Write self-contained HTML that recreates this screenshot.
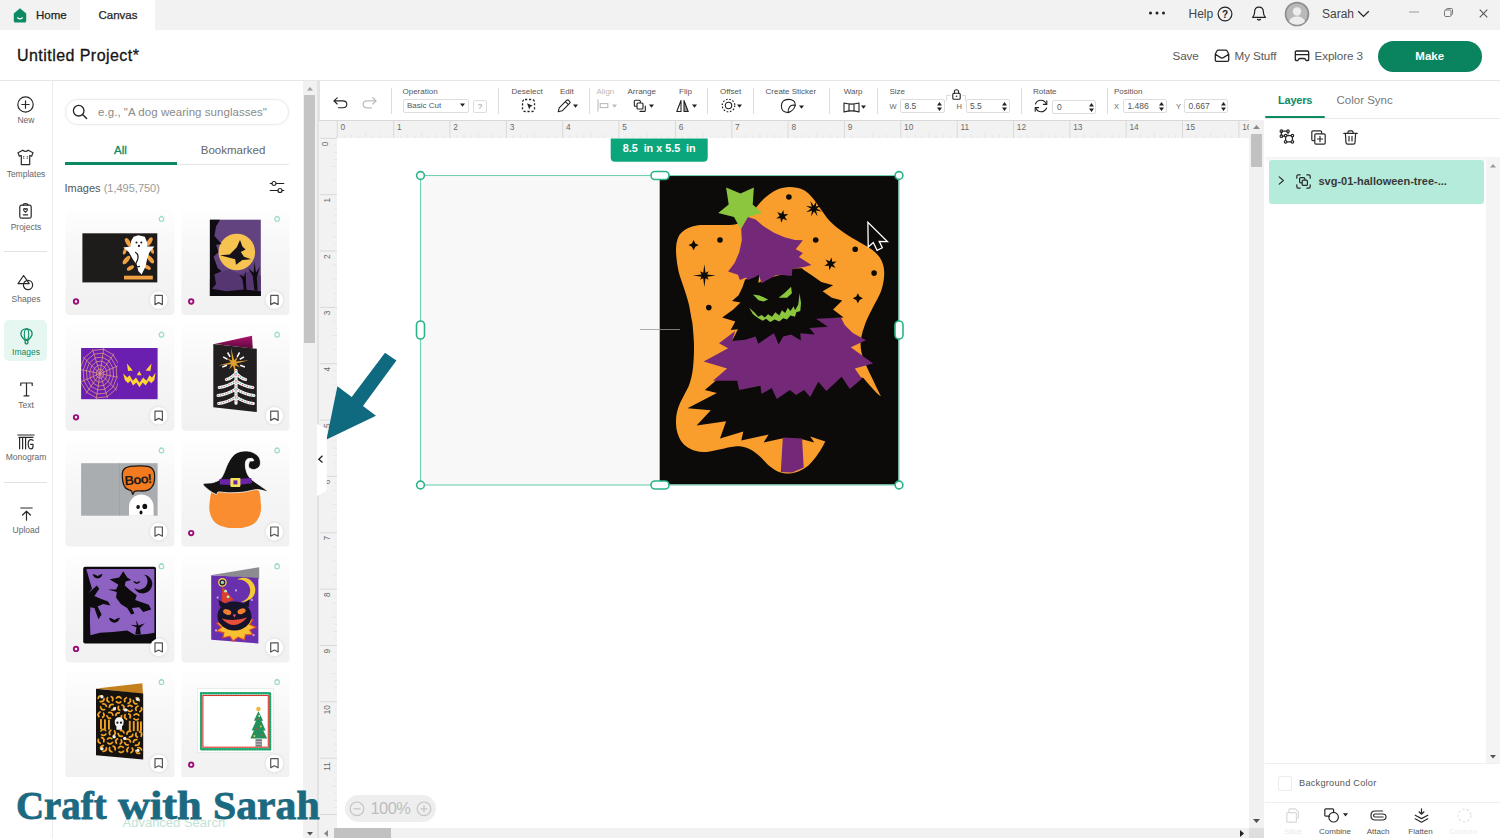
<!DOCTYPE html>
<html lang="en">
<head>
<meta charset="utf-8">
<title>Untitled Project</title>
<style>
*{box-sizing:border-box;margin:0;padding:0}
html,body{width:1500px;height:838px;overflow:hidden;background:#fff}
body{font-family:"Liberation Sans",sans-serif;color:#333;position:relative}
.abs{position:absolute}
.t{position:absolute;white-space:nowrap;line-height:1}
svg{position:absolute;overflow:visible}
/* top bar */
#topbar{left:0;top:0;width:1500px;height:30px;background:#f2f2f2}
#tabcanvas{left:80px;top:0;width:75px;height:30px;background:#fff}
#titlebar{left:0;top:30px;width:1500px;height:51px;background:#fff;border-bottom:1px solid #e6e6e6}
/* left nav */
#leftnav{left:0;top:81px;width:53px;height:757px;background:#fff;border-right:1px solid #ececec}
.navlbl{font-size:8.5px;color:#666;width:52px;text-align:center;left:0}
/* image panel */
#imgpanel{left:53px;top:81px;width:250px;height:757px;background:#fff}
.card{position:absolute;width:109px;height:108px;border-radius:5px;background:linear-gradient(#fdfdfd,#f1f1f1)}
/* panel scrollbar */
#pscroll{left:303px;top:81px;width:14px;height:757px;background:#f1f1f1}
#pthumb{left:304px;top:95px;width:11px;height:248px;background:#c4c4c4}
/* canvas */
#toolbar{left:319px;top:81px;width:946px;height:39px;background:#fff}
#hruler{left:319px;top:120px;width:930px;height:18px;background:#f2f2f2}
#vruler{left:319px;top:138px;width:18px;height:690px;background:#f2f2f2}
.tl{font-size:8px;color:#555}
.sep{position:absolute;width:1px;background:#dcdcdc;top:88px;height:26px}
/* right panel */
#rpanel{left:1263.500px;top:81px;width:237px;height:757px;background:#fff}
</style>
</head>
<body>
<!-- TOPBAR -->
<div id="topbar" class="abs"></div>
<div id="tabcanvas" class="abs"></div>
<svg style="left:13px;top:8px" width="14" height="15" viewBox="0 0 14 15"><path d="M7 0.3 L13.2 5.4 V13 Q13.2 14.6 11.6 14.6 H2.4 Q0.8 14.6 0.8 13 V5.4 Z" fill="#0b8a63"/><path d="M4.6 9.8 Q7 11.9 9.4 9.8" stroke="#fff" stroke-width="1.2" fill="none" stroke-linecap="round"/></svg>
<div class="t" style="left:36px;top:10px;font-size:11.5px;color:#1f1f1f;-webkit-text-stroke:0.25px #1f1f1f">Home</div>
<div class="t" style="left:98.5px;top:10px;font-size:11.5px;color:#1f1f1f;-webkit-text-stroke:0.25px #1f1f1f">Canvas</div>
<svg style="left:1148px;top:10px" width="20" height="6"><circle cx="2.5" cy="3" r="1.5" fill="#222"/><circle cx="9" cy="3" r="1.5" fill="#222"/><circle cx="15.5" cy="3" r="1.5" fill="#222"/></svg>
<div class="t" style="left:1188.5px;top:8px;font-size:12px;color:#444">Help</div>
<svg style="left:1217px;top:5.5px" width="16" height="16" viewBox="0 0 16 16"><circle cx="8" cy="8" r="6.9" fill="none" stroke="#222" stroke-width="1.2"/><text x="8" y="11.6" font-size="10" font-family="Liberation Sans, sans-serif" text-anchor="middle" fill="#222" font-weight="bold">?</text></svg>
<svg style="left:1251px;top:6px" width="16" height="16" viewBox="0 0 16 16"><path d="M8 1.2 C5 1.2 3.6 3.6 3.6 6.2 C3.6 9 2.6 10.2 1.6 11.4 H14.4 C13.4 10.2 12.4 9 12.4 6.2 C12.4 3.6 11 1.2 8 1.2 Z" fill="none" stroke="#222" stroke-width="1.2" stroke-linejoin="round"/><path d="M6.3 13 Q8 15 9.7 13" fill="none" stroke="#222" stroke-width="1.2"/></svg>
<svg style="left:1284px;top:0.5px" width="26" height="26" viewBox="0 0 26 26"><circle cx="13" cy="13" r="12.3" fill="#8e8e8e"/><circle cx="13" cy="13" r="10.6" fill="#b9b9b9"/><circle cx="13" cy="10.5" r="4.2" fill="#ededed"/><path d="M5 20.5 Q7 15.6 13 15.6 Q19 15.6 21 20.5 Q17.5 23.8 13 23.8 Q8.500 23.8 5 20.5Z" fill="#ededed"/></svg>
<div class="t" style="left:1322px;top:8px;font-size:12px;color:#444">Sarah</div>
<svg style="left:1357px;top:10px" width="13" height="8" viewBox="0 0 13 8"><path d="M1.2 1.2 L6.5 6.4 L11.8 1.2" fill="none" stroke="#222" stroke-width="1.3"/></svg>
<svg style="left:1409px;top:11px" width="10" height="2"><rect width="10" height="1" y="0.5" fill="#9a9a9a"/></svg>
<svg style="left:1444px;top:8px" width="9" height="9" viewBox="0 0 9 9"><rect x="0.5" y="2" width="6.5" height="6.5" rx="1.3" fill="none" stroke="#777" stroke-width="1"/><path d="M2.2 2 V1.6 Q2.2 0.500 3.300 0.500 H7.4 Q8.5 0.500 8.5 1.600 V5.700 Q8.5 6.800 7.400 6.800 H7" fill="none" stroke="#777" stroke-width="1"/></svg>
<svg style="left:1478.500px;top:8.500px" width="9" height="9" viewBox="0 0 9 9"><path d="M0.700 0.700 L8.300 8.300 M8.300 0.700 L0.700 8.300" stroke="#555" stroke-width="1.100"/></svg>
<div id="titlebar" class="abs"></div>
<div class="t" style="left:17px;top:48px;font-size:16px;letter-spacing:0.450px;color:#151515;-webkit-text-stroke:0.3px #151515">Untitled Project*</div>
<div class="t" style="left:1172.500px;top:50px;font-size:11.700px;color:#5a5a5a;letter-spacing:-0.100px">Save</div>
<svg style="left:1214px;top:49px" width="16" height="14" viewBox="0 0 16 14"><path d="M1.300 5 V11 Q1.300 12.400 2.700 12.400 H13.300 Q14.700 12.400 14.700 11 V5 M1.300 5 L3 1.800 Q3.300 1.200 4 1.200 H12 Q12.700 1.200 13 1.800 L14.700 5 M1.300 5.300 L6.600 8.600 Q8 9.400 9.400 8.600 L14.700 5.300" fill="none" stroke="#222" stroke-width="1.300" stroke-linejoin="round"/></svg>
<div class="t" style="left:1234.500px;top:50px;font-size:11.700px;color:#5a5a5a;letter-spacing:-0.100px">My Stuff</div>
<svg style="left:1294px;top:50px" width="16" height="12" viewBox="0 0 16 12"><path d="M2.600 1 H13.400 Q14.700 1 14.700 2.300 V9.800 Q14.700 10.500 14 10.500 H12.400 Q11.800 10.500 11.600 9.900 Q11.300 8.500 10.200 8.500 H5.800 Q4.700 8.500 4.400 9.900 Q4.200 10.500 3.600 10.500 H2 Q1.300 10.500 1.300 9.800 V2.300 Q1.300 1 2.600 1 Z M1.300 4.600 H14.700" fill="none" stroke="#222" stroke-width="1.300" stroke-linejoin="round"/></svg>
<div class="t" style="left:1314.500px;top:50px;font-size:11.700px;color:#5a5a5a;letter-spacing:-0.100px">Explore 3</div>
<div class="abs" style="left:1378px;top:40.500px;width:103.500px;height:31px;border-radius:16px;background:#0a835f"></div>
<div class="t" style="left:1378px;top:50.500px;width:103.500px;text-align:center;font-size:11.500px;font-weight:bold;color:#fff">Make</div>
<!-- LEFTNAV -->
<div id="leftnav" class="abs"></div>
<svg style="left:17px;top:96px" width="17" height="17" viewBox="0 0 17 17"><circle cx="8.500" cy="8.500" r="7.700" fill="none" stroke="#2a2a2a" stroke-width="1.2" stroke-linejoin="round" stroke-linecap="round"/><path d="M8.500 4.800 V12.200 M4.800 8.500 H12.200" fill="none" stroke="#2a2a2a" stroke-width="1.2" stroke-linejoin="round" stroke-linecap="round"/></svg>
<div class="t navlbl" style="top:116px">New</div>
<svg style="left:17px;top:149px" width="17" height="17" viewBox="0 0 17 17"><path d="M5.800 1.200 L1 3.800 L2.400 7.200 L4.300 6.500 V15.600 H12.700 V6.500 L14.600 7.200 L16 3.800 L11.200 1.200 Q8.500 3.600 5.800 1.200 Z" fill="none" stroke="#2a2a2a" stroke-width="1.2" stroke-linejoin="round" stroke-linecap="round"/><path d="M6.800 7.500 V9.500 M10.200 7.500 V9.500" fill="none" stroke="#2a2a2a" stroke-width="1.2" stroke-linejoin="round" stroke-linecap="round" stroke-dasharray="0.100 1.500"/></svg>
<div class="t navlbl" style="top:170px">Templates</div>
<svg style="left:19px;top:203px" width="13" height="16" viewBox="0 0 13 16"><rect x="0.800" y="2.200" width="11.400" height="13" rx="1.800" fill="none" stroke="#2a2a2a" stroke-width="1.2" stroke-linejoin="round" stroke-linecap="round"/><path d="M4.200 2.200 Q4.200 0.700 6.500 0.700 Q8.800 0.700 8.800 2.200" fill="none" stroke="#2a2a2a" stroke-width="1.2" stroke-linejoin="round" stroke-linecap="round"/><path d="M6.500 9.200 Q4.200 7.600 4.600 6.300 Q5.200 5.100 6.500 6.300 Q7.800 5.100 8.400 6.300 Q8.800 7.600 6.500 9.200 Z M4.300 11.800 H8.700" fill="none" stroke="#2a2a2a" stroke-width="1.2" stroke-linejoin="round" stroke-linecap="round" stroke-width="1"/></svg>
<div class="t navlbl" style="top:223px">Projects</div>
<div class="abs" style="left:4px;top:251px;width:43px;height:1px;background:#e2e2e2"></div>
<svg style="left:17px;top:274px" width="17" height="17" viewBox="0 0 17 17"><path d="M6.600 1.500 L12.200 9.600 H1 Z" fill="none" stroke="#2a2a2a" stroke-width="1.2" stroke-linejoin="round" stroke-linecap="round"/><circle cx="11" cy="11" r="4.600" fill="none" stroke="#2a2a2a" stroke-width="1.2" stroke-linejoin="round" stroke-linecap="round"/></svg>
<div class="t navlbl" style="top:294.5px">Shapes</div>
<div class="abs" style="left:4px;top:320px;width:43px;height:41px;border-radius:5px;background:#e6f6f0"></div>
<svg style="left:19.500px;top:327.500px" width="13" height="17" viewBox="0 0 13 17"><path d="M6.500 0.800 C3 0.800 0.900 3 0.900 5.800 C0.900 8.600 3.600 10.800 5.200 12.400 H7.800 C9.400 10.800 12.100 8.600 12.100 5.800 C12.100 3 10 0.800 6.500 0.800 Z" fill="none" stroke="#0b8a63" stroke-width="1.300"/><ellipse cx="6.500" cy="6.200" rx="2.200" ry="5.300" fill="none" stroke="#0b8a63" stroke-width="1.100"/><path d="M5.200 12.400 V15 Q5.200 15.800 6 15.800 H7 Q7.800 15.800 7.800 15 V12.400" fill="none" stroke="#0b8a63" stroke-width="1.300"/></svg>
<div class="t navlbl" style="top:348px;color:#0b8a63">Images</div>
<svg style="left:19.500px;top:382px" width="13" height="15" viewBox="0 0 13 15"><path d="M0.800 3.400 V1 H12.200 V3.400 M6.500 1 V13.800 M4 13.800 H9" fill="none" stroke="#2a2a2a" stroke-width="1.2" stroke-linejoin="round" stroke-linecap="round" stroke-width="1.300"/></svg>
<div class="t navlbl" style="top:400.5px">Text</div>
<svg style="left:17px;top:434px" width="18" height="16" viewBox="0 0 18 16"><path d="M0.800 1 H17.200 M2 3.400 H16 M2.600 3.400 V14.800 M5.600 3.400 V14.800 M8.600 3.400 V14.800 M16 6.400 Q15.500 5.600 14 5.600 Q11.200 5.600 11.200 10 Q11.200 14.800 14 14.800 Q16 14.800 16 12.400 V10.300 H13.600" fill="none" stroke="#2a2a2a" stroke-width="1.2" stroke-linejoin="round" stroke-linecap="round" stroke-width="1.100"/></svg>
<div class="t navlbl" style="top:453px">Monogram</div>
<div class="abs" style="left:4px;top:482px;width:43px;height:1px;background:#e2e2e2"></div>
<svg style="left:19.500px;top:506.500px" width="13" height="14" viewBox="0 0 13 14"><path d="M0.800 1 H12.200 M6.500 4.200 V13.200 M2.600 8 L6.500 4.200 L10.400 8" fill="none" stroke="#2a2a2a" stroke-width="1.2" stroke-linejoin="round" stroke-linecap="round" stroke-width="1.300"/></svg>
<div class="t navlbl" style="top:526px">Upload</div>
<!-- IMGPANEL -->
<div id="imgpanel" class="abs"></div>
<div class="abs" style="left:64.500px;top:99px;width:224.500px;height:26px;border-radius:13px;background:#fff;border:1px solid #ededed;box-shadow:0 0 3px rgba(0,0,0,0.06)"></div>
<svg style="left:72px;top:103.500px" width="16" height="16" viewBox="0 0 16 16"><circle cx="6.700" cy="6.700" r="5.300" fill="none" stroke="#222" stroke-width="1.300"/><path d="M10.600 10.600 L14.600 14.600" stroke="#222" stroke-width="1.400" stroke-linecap="round"/></svg>
<div class="t" style="left:98px;top:107px;font-size:11.500px;color:#8a8a8a;letter-spacing:0.050px">e.g., "A dog wearing sunglasses"</div>
<div class="t" style="left:64.500px;width:112px;text-align:center;top:145px;font-size:11.500px;color:#0b8a63;-webkit-text-stroke:0.300px #0b8a63">All</div>
<div class="t" style="left:177px;width:112px;text-align:center;top:145px;font-size:11.500px;color:#666">Bookmarked</div>
<div class="abs" style="left:64.500px;top:163.500px;width:224px;height:1px;background:#e6e6e6"></div>
<div class="abs" style="left:64.500px;top:162px;width:112px;height:2.500px;background:#0b8a63"></div>
<div class="t" style="left:64.500px;top:182.500px;font-size:11px;color:#555">Images <span style="color:#999">(1,495,750)</span></div>
<svg style="left:269px;top:179.500px" width="16" height="14" viewBox="0 0 16 14"><path d="M0.800 3.500 H15.200 M0.800 10.500 H15.200" stroke="#222" stroke-width="1.200"/><circle cx="5" cy="3.500" r="2" fill="#fff" stroke="#222" stroke-width="1.200"/><circle cx="11" cy="10.500" r="2" fill="#fff" stroke="#222" stroke-width="1.200"/></svg>
<!-- CARDS -->
<svg style="left:0;top:0" width="320" height="838">
<defs><linearGradient id="cg" x1="0" y1="0" x2="0" y2="1"><stop offset="0" stop-color="#fefefe"/><stop offset="0.450" stop-color="#f6f6f6"/><stop offset="1" stop-color="#f1f1f1"/></linearGradient><linearGradient id="mg" x1="0" y1="0" x2="0" y2="1"><stop offset="0" stop-color="#b0126e"/><stop offset="1" stop-color="#5a0a3c"/></linearGradient></defs>
<rect x="65.5" y="208.5" width="109" height="106.500" rx="4" fill="url(#cg)"/>
<rect x="181.5" y="208.5" width="108" height="106.500" rx="4" fill="url(#cg)"/>
<rect x="65.5" y="324.3" width="109" height="106.500" rx="4" fill="url(#cg)"/>
<rect x="181.5" y="324.3" width="108" height="106.500" rx="4" fill="url(#cg)"/>
<rect x="65.5" y="440.1" width="109" height="106.500" rx="4" fill="url(#cg)"/>
<rect x="181.5" y="440.1" width="108" height="106.500" rx="4" fill="url(#cg)"/>
<rect x="65.5" y="555.9" width="109" height="106.500" rx="4" fill="url(#cg)"/>
<rect x="181.5" y="555.9" width="108" height="106.500" rx="4" fill="url(#cg)"/>
<rect x="65.5" y="671.7" width="109" height="106.500" rx="4" fill="url(#cg)"/>
<rect x="181.5" y="671.7" width="108" height="106.500" rx="4" fill="url(#cg)"/>
<rect x="82.4" y="233.3" width="74.9" height="49.1" fill="#1d1c1b"/>
<g fill="#f0a040"><ellipse cx="128.0" cy="242.4" rx="2.2" ry="4.8" transform="rotate(-30 128.0 242.4)"/><ellipse cx="149.6" cy="241.6" rx="2.2" ry="4.8" transform="rotate(30 149.6 241.6)"/><ellipse cx="126.4" cy="260.0" rx="2.2" ry="5.1" transform="rotate(40 126.4 260.0)"/><ellipse cx="150.4" cy="259.2" rx="2.2" ry="5.1" transform="rotate(-40 150.4 259.2)"/><ellipse cx="130.4" cy="268.0" rx="1.9" ry="4.0" transform="rotate(60 130.4 268.0)"/><ellipse cx="147.2" cy="267.2" rx="1.9" ry="4.0" transform="rotate(-60 147.2 267.2)"/><ellipse cx="152.0" cy="250.4" rx="1.6" ry="3.5" transform="rotate(-20 152.0 250.4)"/><ellipse cx="124.8" cy="251.2" rx="1.6" ry="3.5" transform="rotate(20 124.8 251.2)"/></g>
<path d="M138.4 235.2 L144.8 236.8 L147.2 242.4 L147.2 246.4 L154.4 246.4 L149.6 252.0 L147.2 258.4 L145.6 266.4 L141.6 274.4 L138.4 271.2 L136.8 264.8 L132.8 259.2 L128.8 252.0 L123.2 247.5 L130.4 246.4 L131.2 240.8 L133.6 236.8 Z" fill="#fff"/>
<g fill="#1d1c1b"><circle cx="136.5" cy="242.4" r="1"/><circle cx="141.3" cy="242.4" r="1"/><circle cx="138.9" cy="245.9" r="1.100"/></g>
<path d="M135.2 252.0 Q140.0 255.2 136.8 261.6 T140.0 266.4" stroke="#1d1c1b" stroke-width="1.200" fill="none"/>
<rect x="124.0" y="275.7" width="28.8" height="3.8" fill="#f0a040"/>
<rect x="209.9" y="219.7" width="50.9" height="76.3" fill="#62437f"/>
<circle cx="236.8" cy="252.0" r="18.300" fill="#f6c250"/>
<path d="M209.9 279.2 L218.4 272.8 L229.6 269.6 L240.8 274.4 L250.4 271.2 L260.8 276.0 L260.8 296.0 L209.9 296.0 Z" fill="#553670"/>
<path d="M209.9 219.7 L220.0 219.7 L216.0 226.4 L214.4 236.0 L221.6 244.0 L216.0 244.8 L218.4 252.0 L213.6 256.8 L217.6 268.0 L221.6 271.2 L214.4 274.4 L216.0 284.0 L212.0 288.8 L226.4 291.2 L244.0 289.6 L260.8 291.2 L260.8 296.0 L209.9 296.0 Z" fill="#0e0c10"/>
<path d="M254.4 290.4 L252.8 276.0 L248.0 268.0 L253.6 272.8 L254.4 261.6 L256.0 272.8 L260.0 266.4 L256.8 277.6 L257.6 290.4 Z" fill="#0e0c10"/>
<path d="M244.0 290.4 L242.4 279.2 L239.2 274.4 L244.0 276.8 L245.6 271.2 L246.4 290.4 Z" fill="#0e0c10"/>
<path d="M240.0 240.0 L242.4 246.4 L245.6 249.6 L240.8 252.0 L244.0 256.8 L251.2 259.2 L242.4 260.0 L236.0 264.8 L235.2 259.2 L220.0 255.2 L229.6 254.4 L233.6 250.4 L236.8 247.2 Z" fill="#15121a"/>
<rect x="81.1" y="348.0" width="76.5" height="51.2" fill="#6b1fb1"/>
<clipPath id="wc"><rect x="81.1" y="348.0" width="36.8" height="51.2"/></clipPath><g clip-path="url(#wc)"><path d="M100.0 373.6 L121.7 378.1 M100.0 373.6 L116.9 390.3 M100.0 373.6 L107.5 398.0 M100.0 373.6 L96.2 399.2 M100.0 373.6 L85.9 393.5 M100.0 373.6 L79.3 382.5 M100.0 373.6 L78.3 369.1 M100.0 373.6 L83.1 356.9 M100.0 373.6 L92.5 349.2 M100.0 373.6 L103.8 348.0 M100.0 373.6 L114.1 353.7 M100.0 373.6 L120.7 364.7 M103.7 374.4 L102.9 376.6 L101.3 377.9 L99.3 378.1 L97.6 377.1 L96.4 375.2 L96.3 372.8 L97.1 370.6 L98.7 369.3 L100.7 369.1 L102.4 370.1 L103.6 372.0 Z M107.0 375.1 L105.5 379.1 L102.4 381.7 L98.8 382.1 L95.4 380.2 L93.3 376.5 L93.0 372.1 L94.5 368.1 L97.6 365.5 L101.2 365.1 L104.6 367.0 L106.7 370.7 Z M110.3 375.8 L108.0 381.7 L103.6 385.5 L98.2 386.1 L93.3 383.3 L90.2 377.9 L89.7 371.4 L92.0 365.5 L96.4 361.7 L101.8 361.1 L106.7 363.9 L109.8 369.3 Z M113.6 376.5 L110.6 384.3 L104.7 389.3 L97.6 390.0 L91.1 386.4 L87.1 379.3 L86.4 370.7 L89.4 362.9 L95.3 357.9 L102.4 357.2 L108.9 360.8 L112.9 367.9 Z M116.8 377.2 L113.1 386.9 L105.8 393.1 L97.0 394.0 L89.0 389.5 L83.9 380.7 L83.2 370.0 L86.9 360.3 L94.2 354.1 L103.0 353.2 L111.0 357.7 L116.1 366.5 Z M120.1 377.9 L115.6 389.5 L107.0 396.8 L96.5 397.9 L86.9 392.5 L80.8 382.1 L79.9 369.3 L84.4 357.7 L93.0 350.4 L103.5 349.3 L113.1 354.7 L119.2 365.1 Z " stroke="#e9a27e" stroke-width="0.750" fill="none" opacity="0.950"/></g>
<path d="M126.9 363.5 L132.8 370.4 L128.0 370.9 Z M151.5 363.5 L145.6 370.4 L150.4 370.9 Z M139.2 370.9 L141.6 375.2 L136.8 375.2 Z M123.2 373.6 L127.2 377.6 L129.6 375.2 L132.8 380.8 L136.0 377.6 L139.5 382.7 L143.2 377.6 L146.4 380.8 L149.6 375.2 L152.0 377.6 L155.5 372.8 L154.4 380.0 L151.2 383.2 L148.8 380.8 L145.6 385.6 L142.7 382.4 L139.5 387.2 L136.3 382.4 L133.1 385.6 L130.4 380.8 L128.0 383.2 L124.8 380.0 Z" fill="#ffd531"/>
<path d="M214.4 344.0 L252.0 335.7 L252.8 348.5 Z" fill="url(#mg)"/>
<path d="M213.3 344.0 L256.8 348.8 L256.8 412.0 L213.3 407.2 Z" fill="#221f20"/>
<path d="M230.9 347.6 L234.2 360.2 L238.2 356.3 L235.9 361.4 L248.9 360.2 L236.2 363.5 L240.2 367.5 L235.1 365.2 L236.3 378.1 L233.0 365.5 L229.0 369.4 L231.3 364.3 L218.3 365.6 L231.0 362.3 L227.0 358.3 L232.1 360.6 Z" fill="#e0a030"/>
<path d="M227.5 359.4 L223.2 356.9 M230.1 356.8 L227.6 352.5 M237.1 356.8 L239.6 352.5 M239.7 359.4 L244.0 356.9 M240.2 365.3 L244.9 367.0 M227.0 365.3 L222.3 367.0 " stroke="#fff" stroke-width="1.500"/>
<path d="M236.0 370.4 V403.2 M226.4 379.5 Q231.2 378.5 236.0 373.0 Q240.8 378.5 245.6 379.5 M219.2 387.5 Q227.6 386.5 236.0 381.0 Q244.4 386.5 252.8 387.5 M218.1 395.5 Q227.0 394.5 236.0 389.0 Q245.0 394.5 253.9 395.5 M218.7 403.5 Q227.4 402.5 236.0 397.0 Q244.6 402.5 253.3 403.5 " stroke="#f4f4f0" stroke-width="3.200" fill="none" stroke-linecap="round"/>
<path d="M236.0 370.4 V403.2 M226.4 379.5 Q231.2 378.5 236.0 373.0 Q240.8 378.5 245.6 379.5 M219.2 387.5 Q227.6 386.5 236.0 381.0 Q244.4 386.5 252.8 387.5 M218.1 395.5 Q227.0 394.5 236.0 389.0 Q245.0 394.5 253.9 395.5 M218.7 403.5 Q227.4 402.5 236.0 397.0 Q244.6 402.5 253.3 403.5 " stroke="#d04a7a" stroke-width="1.200" fill="none" stroke-dasharray="0.100 5" stroke-linecap="round"/>
<path d="M236.0 370.4 V403.2 M226.4 379.5 Q231.2 378.5 236.0 373.0 Q240.8 378.5 245.6 379.5 M219.2 387.5 Q227.6 386.5 236.0 381.0 Q244.4 386.5 252.8 387.5 M218.1 395.5 Q227.0 394.5 236.0 389.0 Q245.0 394.5 253.9 395.5 M218.7 403.5 Q227.4 402.5 236.0 397.0 Q244.6 402.5 253.3 403.5 " stroke="#45b8a0" stroke-width="1.200" fill="none" stroke-dasharray="0.100 5" stroke-dashoffset="2.500" stroke-linecap="round"/>
<rect x="81.1" y="463.2" width="76.5" height="52.5" fill="#a9adb0"/>
<rect x="119.2" y="463.2" width="0.700" height="52.5" fill="#c98a94"/>
<path d="M123.2 470.4 C124.5 468.0 126.3 467.1 130.4 466.4 C134.5 465.7 144.1 465.5 148.0 466.4 C151.9 467.3 153.1 469.1 154.1 472.0 C155.0 474.9 154.7 480.9 153.6 484.0 C152.5 487.1 150.3 489.2 147.2 490.4 C144.1 491.6 137.6 490.5 135.2 491.2 C132.8 491.9 133.5 494.5 132.8 494.4 C132.1 494.3 132.4 491.8 131.2 490.7 C130.0 489.7 127.0 489.7 125.6 488.0 C124.2 486.3 123.1 483.7 122.7 480.8 C122.3 477.9 121.9 472.8 123.2 470.4 Z" fill="#f37a1f" stroke="#1a1a1a" stroke-width="1.300"/>
<text x="138.4" y="484.0" text-anchor="middle" font-size="13" font-weight="bold" fill="#1a1a1a" font-family="Liberation Sans, sans-serif" transform="rotate(-5 138.4 484.0)" letter-spacing="-0.700">Boo!</text>
<path d="M129.0 515.7 V506.7 A12.300 12.300 0 0 1 153.6 506.7 V515.7 Z" fill="#fff"/>
<g fill="#111"><ellipse cx="138.1" cy="506.9" rx="1.800" ry="2"/><ellipse cx="144.8" cy="506.4" rx="2.400" ry="2.700"/><ellipse cx="141.0" cy="512.5" rx="1.500" ry="1.900"/></g>
<path d="M214.4 488.8 C218.8 486.1 228.9 487.2 236.0 487.2 C243.1 487.2 252.7 486.1 256.8 488.8 C260.9 491.5 260.3 498.9 260.8 503.2 C261.3 507.5 261.1 511.1 260.0 514.4 C258.9 517.7 257.1 521.0 254.4 523.2 C251.7 525.4 247.2 526.7 244.0 527.5 C240.8 528.3 238.1 528.0 235.2 528.0 C232.3 528.0 229.6 528.3 226.4 527.5 C223.2 526.7 218.7 525.4 216.0 523.2 C213.3 521.0 211.5 517.7 210.4 514.4 C209.3 511.1 208.9 507.5 209.6 503.2 C210.3 498.9 210.0 491.5 214.4 488.8 Z" fill="#f98d2f"/>
<path d="M203.2 484.0 C203.7 482.5 210.5 483.5 213.6 482.4 C216.7 481.3 219.2 480.8 221.6 477.6 C224.0 474.4 225.9 467.1 228.0 463.2 C230.1 459.3 232.0 456.4 234.4 454.4 C236.8 452.4 239.5 451.6 242.4 451.2 C245.3 450.8 249.2 450.9 252.0 452.0 C254.8 453.1 257.9 455.3 259.2 457.6 C260.5 459.9 260.8 463.6 260.0 465.6 C259.2 467.6 256.3 469.3 254.4 469.6 C252.5 469.9 249.6 468.5 248.8 467.2 C248.0 465.9 248.8 462.7 249.6 461.6 C250.4 460.5 253.2 461.3 253.6 460.8 C254.0 460.3 253.2 458.5 252.0 458.4 C250.8 458.3 247.5 458.4 246.4 460.0 C245.3 461.6 245.1 465.1 245.6 468.0 C246.1 470.9 247.2 474.7 249.6 477.6 C252.0 480.5 257.1 483.3 260.0 485.6 C262.9 487.9 267.7 490.5 267.2 491.2 C266.7 491.9 260.7 489.5 256.8 489.6 C252.9 489.7 248.5 491.5 244.0 492.0 C239.5 492.5 233.9 492.8 229.6 492.8 C225.3 492.8 220.5 491.7 218.4 492.0 C216.3 492.3 218.1 494.5 216.8 494.4 C215.5 494.3 212.7 492.9 210.4 491.2 C208.1 489.5 202.7 485.5 203.2 484.0 Z" fill="#131313" stroke="#fff" stroke-width="0.800"/>
<path d="M219.2 479.2 L235.2 478.9 L251.2 477.9 L252.0 483.2 L236.0 485.3 L220.0 484.5 Z" fill="#6a22a6"/>
<rect x="230.4" y="477.9" width="10" height="9" rx="0.800" fill="#f2e35a"/><rect x="233.4" y="480.4" width="4" height="4" fill="#6a22a6"/>
<rect x="83.2" y="566.7" width="72.8" height="76.8" rx="2" fill="#0d0b0e"/>
<path d="M86.4 569.0 L154.4 569.0 L154.4 632.8 L147.2 633.9 L135.2 634.9 L127.2 630.4 L112.8 632.0 L100.0 632.8 L90.4 635.2 L89.6 612.8 L88.0 592.0 Z" fill="#8e62c2"/>
<path d="M86.4 569.0 L89.6 580.8 L92.0 588.8 L88.0 593.6 L96.8 585.6 L99.2 588.8 L94.4 596.0 L100.0 598.4 L108.0 601.6 L110.4 605.6 L103.2 604.0 L97.6 606.4 L101.6 614.4 L98.4 619.2 L94.4 608.0 L90.4 607.2 L89.6 619.2 L86.4 635.2 Z" fill="#0d0b0e"/>
<path d="M109.6 579.2 L119.2 577.6 L123.2 571.2 L127.2 577.6 L131.2 580.0 L125.6 581.6 L124.8 585.6 L130.4 590.4 L136.8 595.2 L135.2 600.0 L148.8 604.8 L151.2 609.6 L143.2 612.0 L139.2 607.2 L132.0 608.0 L134.4 613.6 L131.2 614.4 L127.2 608.0 L120.8 604.0 L116.0 597.6 L116.8 592.0 L108.0 589.6 L116.0 589.6 L118.4 584.8 Z" fill="#0d0b0e"/>
<path d="M144.2 574.5 A9.500 9.500 0 1 1 134.2 588.0 A7.500 7.500 0 0 0 144.2 574.5 Z" fill="#0d0b0e"/>
<path d="M92.6 574.0 Q95.6 574.5 97.6 576.0 Q99.6 574.5 102.6 574.0 Q101.6 578.0 97.6 578.5 Q93.6 578.0 92.6 574.0 Z" fill="#0d0b0e"/>
<path d="M108.9 617.8 Q112.2 618.4 114.4 620.0 Q116.6 618.4 119.9 617.8 Q118.8 622.2 114.4 622.8 Q110.0 622.2 108.9 617.8 Z" fill="#0d0b0e"/>
<path d="M133.3 581.0 Q135.4 581.4 136.8 582.4 Q138.2 581.4 140.3 581.0 Q139.6 583.8 136.8 584.1 Q134.0 583.8 133.3 581.0 Z" fill="#0d0b0e"/>
<path d="M135.2 634.4 L136.5 627.2 L130.4 624.8 L136.8 625.3 L136.0 620.0 L138.7 625.6 L144.8 623.2 L140.0 628.0 L140.8 634.4 Z" fill="#0d0b0e"/>
<path d="M212.0 574.9 L259.2 567.2 L259.2 578.7 Z" fill="#8b8b90"/>
<path d="M211.2 575.2 L258.4 577.9 L258.4 643.5 L211.2 639.7 Z" fill="#6930ae"/>
<path d="M256.1 627.2 L249.8 630.0 L252.9 634.8 L245.4 634.8 L244.4 639.9 L238.0 637.1 L233.1 641.1 L230.0 636.3 L222.8 637.8 L223.9 632.6 L216.7 631.1 L221.6 627.2 L216.7 623.3 L223.9 621.8 L222.8 616.6 L230.0 618.1 L233.1 613.3 L238.0 617.3 L244.4 614.5 L245.4 619.6 L252.9 619.6 L249.8 624.4 Z" fill="#f8c030" stroke="#e2452a" stroke-width="1.100"/>
<path d="M222.4 586.4 L233.6 600.0 L221.6 604.0 Z" fill="#d8402c"/>
<circle cx="222.4" cy="582.4" r="4.300" fill="#f5d040"/><circle cx="222.4" cy="582.4" r="3" fill="#2a1a40"/><circle cx="222.4" cy="582.4" r="1.700" fill="#8fe0a0"/>
<circle cx="225.6" cy="591.2" r="1.400" fill="#b8f0c0"/>
<circle cx="228.0" cy="596.8" r="1.400" fill="#b8f0c0"/>
<path d="M237.0 579.6 A12 12 0 1 1 241.0 601.6 A8 8 0 0 0 237.0 579.6 Z" fill="#f5c935"/>
<ellipse cx="234.4" cy="616.0" rx="17" ry="14.500" fill="#17132a"/>
<path d="M220.0 607.2 L218.4 600.0 L226.4 604.0 Z M242.4 604.0 L249.6 599.2 L248.8 607.2 Z" fill="#17132a"/>
<ellipse cx="227.2" cy="612.0" rx="4.200" ry="2.600" fill="#f08030" transform="rotate(20 227.2 612.0)"/><ellipse cx="241.6" cy="611.2" rx="4.200" ry="2.600" fill="#f08030" transform="rotate(-20 241.6 611.2)"/>
<path d="M232.6 614.5 H236.2 L234.4 617.5 Z" fill="#f0506a"/>
<path d="M221.6 618.4 Q234.4 632.0 247.2 617.6 Q234.4 622.0 221.6 618.4 Z" fill="#e8503a"/>
<circle cx="236.0" cy="590.4" r="1.100" fill="#c8a0e8"/>
<circle cx="216.0" cy="630.4" r="1.100" fill="#c8a0e8"/>
<circle cx="253.6" cy="635.2" r="1.100" fill="#c8a0e8"/>
<circle cx="252.0" cy="600.0" r="1.100" fill="#c8a0e8"/>
<circle cx="217.6" cy="597.6" r="1.100" fill="#c8a0e8"/>
<path d="M96.5 688.5 L142.4 683.2 L142.9 693.9 Z" fill="#c5801e"/>
<path d="M96.0 688.8 L143.2 693.6 L143.2 759.5 L96.0 755.2 Z" fill="#15120f"/>
<circle cx="101.1" cy="698.8" r="2.900" fill="none" stroke="#f0a224" stroke-width="1.700" stroke-dasharray="6 2.500" transform="rotate(0 101.1 698.8)"/><circle cx="109.9" cy="699.3" r="2.900" fill="none" stroke="#f0a224" stroke-width="1.700" stroke-dasharray="6 2.500" transform="rotate(110 109.9 699.3)"/><circle cx="118.7" cy="699.8" r="2.900" fill="none" stroke="#f0a224" stroke-width="1.700" stroke-dasharray="6 2.500" transform="rotate(220 118.7 699.8)"/><circle cx="127.5" cy="700.4" r="2.900" fill="none" stroke="#f0a224" stroke-width="1.700" stroke-dasharray="6 2.500" transform="rotate(330 127.5 700.4)"/><circle cx="136.3" cy="700.9" r="2.900" fill="none" stroke="#f0a224" stroke-width="1.700" stroke-dasharray="6 2.500" transform="rotate(80 136.3 700.9)"/><circle cx="103.5" cy="706.8" r="2.900" fill="none" stroke="#f0a224" stroke-width="1.700" stroke-dasharray="6 2.500" transform="rotate(70 103.5 706.8)"/><circle cx="112.3" cy="707.3" r="2.900" fill="none" stroke="#f0a224" stroke-width="1.700" stroke-dasharray="6 2.500" transform="rotate(180 112.3 707.3)"/><circle cx="121.1" cy="707.8" r="2.900" fill="none" stroke="#f0a224" stroke-width="1.700" stroke-dasharray="6 2.500" transform="rotate(290 121.1 707.8)"/><circle cx="129.9" cy="708.4" r="2.900" fill="none" stroke="#f0a224" stroke-width="1.700" stroke-dasharray="6 2.500" transform="rotate(40 129.9 708.4)"/><circle cx="138.7" cy="708.9" r="2.900" fill="none" stroke="#f0a224" stroke-width="1.700" stroke-dasharray="6 2.500" transform="rotate(150 138.7 708.9)"/><circle cx="101.1" cy="714.8" r="2.900" fill="none" stroke="#f0a224" stroke-width="1.700" stroke-dasharray="6 2.500" transform="rotate(140 101.1 714.8)"/><circle cx="109.9" cy="715.3" r="2.900" fill="none" stroke="#f0a224" stroke-width="1.700" stroke-dasharray="6 2.500" transform="rotate(250 109.9 715.3)"/><circle cx="118.7" cy="715.8" r="2.900" fill="none" stroke="#f0a224" stroke-width="1.700" stroke-dasharray="6 2.500" transform="rotate(0 118.7 715.8)"/><circle cx="127.5" cy="716.4" r="2.900" fill="none" stroke="#f0a224" stroke-width="1.700" stroke-dasharray="6 2.500" transform="rotate(110 127.5 716.4)"/><circle cx="136.3" cy="716.9" r="2.900" fill="none" stroke="#f0a224" stroke-width="1.700" stroke-dasharray="6 2.500" transform="rotate(220 136.3 716.9)"/><circle cx="103.5" cy="732.4" r="2.900" fill="none" stroke="#f0a224" stroke-width="1.700" stroke-dasharray="6 2.500" transform="rotate(210 103.5 732.4)"/><circle cx="112.3" cy="732.9" r="2.900" fill="none" stroke="#f0a224" stroke-width="1.700" stroke-dasharray="6 2.500" transform="rotate(320 112.3 732.9)"/><circle cx="121.1" cy="733.4" r="2.900" fill="none" stroke="#f0a224" stroke-width="1.700" stroke-dasharray="6 2.500" transform="rotate(70 121.1 733.4)"/><circle cx="129.9" cy="734.0" r="2.900" fill="none" stroke="#f0a224" stroke-width="1.700" stroke-dasharray="6 2.500" transform="rotate(180 129.9 734.0)"/><circle cx="138.7" cy="734.5" r="2.900" fill="none" stroke="#f0a224" stroke-width="1.700" stroke-dasharray="6 2.500" transform="rotate(290 138.7 734.5)"/><circle cx="101.1" cy="740.4" r="2.900" fill="none" stroke="#f0a224" stroke-width="1.700" stroke-dasharray="6 2.500" transform="rotate(280 101.1 740.4)"/><circle cx="109.9" cy="740.9" r="2.900" fill="none" stroke="#f0a224" stroke-width="1.700" stroke-dasharray="6 2.500" transform="rotate(30 109.9 740.9)"/><circle cx="118.7" cy="741.4" r="2.900" fill="none" stroke="#f0a224" stroke-width="1.700" stroke-dasharray="6 2.500" transform="rotate(140 118.7 741.4)"/><circle cx="127.5" cy="742.0" r="2.900" fill="none" stroke="#f0a224" stroke-width="1.700" stroke-dasharray="6 2.500" transform="rotate(250 127.5 742.0)"/><circle cx="136.3" cy="742.5" r="2.900" fill="none" stroke="#f0a224" stroke-width="1.700" stroke-dasharray="6 2.500" transform="rotate(0 136.3 742.5)"/><circle cx="103.5" cy="748.4" r="2.900" fill="none" stroke="#f0a224" stroke-width="1.700" stroke-dasharray="6 2.500" transform="rotate(350 103.5 748.4)"/><circle cx="112.3" cy="748.9" r="2.900" fill="none" stroke="#f0a224" stroke-width="1.700" stroke-dasharray="6 2.500" transform="rotate(100 112.3 748.9)"/><circle cx="121.1" cy="749.4" r="2.900" fill="none" stroke="#f0a224" stroke-width="1.700" stroke-dasharray="6 2.500" transform="rotate(210 121.1 749.4)"/><circle cx="129.9" cy="750.0" r="2.900" fill="none" stroke="#f0a224" stroke-width="1.700" stroke-dasharray="6 2.500" transform="rotate(320 129.9 750.0)"/><circle cx="138.7" cy="750.5" r="2.900" fill="none" stroke="#f0a224" stroke-width="1.700" stroke-dasharray="6 2.500" transform="rotate(70 138.7 750.5)"/>
<rect x="100.0" y="719.1" width="1.900" height="10" fill="#f0a224"/>
<rect x="104.0" y="719.4" width="1.900" height="10" fill="#f0a224"/>
<rect x="108.0" y="719.6" width="1.900" height="10" fill="#f0a224"/>
<rect x="128.8" y="720.8" width="1.900" height="10" fill="#f0a224"/>
<rect x="132.8" y="721.1" width="1.900" height="10" fill="#f0a224"/>
<rect x="136.8" y="721.3" width="1.900" height="10" fill="#f0a224"/>
<rect x="140.0" y="721.5" width="1.900" height="10" fill="#f0a224"/>
<path d="M114.7 721.7 A4.500 4.500 0 0 1 123.7 721.7 Q123.7 725.2 122.0 726.2 V729.7 H116.4 V726.2 Q114.7 725.2 114.7 721.7 Z" fill="#f4f4f4"/>
<circle cx="117.4" cy="722.7" r="1.100" fill="#15120f"/><circle cx="121.0" cy="722.7" r="1.100" fill="#15120f"/>
<circle cx="101.9" cy="696.8" r="1.700" fill="#f0f0f0"/>
<circle cx="137.6" cy="699.2" r="1.700" fill="#f0f0f0"/>
<circle cx="114.4" cy="708.8" r="1.700" fill="#f0f0f0"/>
<circle cx="125.6" cy="709.9" r="1.700" fill="#f0f0f0"/>
<circle cx="114.1" cy="736.8" r="1.700" fill="#f0f0f0"/>
<circle cx="124.8" cy="738.4" r="1.700" fill="#f0f0f0"/>
<circle cx="101.9" cy="748.8" r="1.700" fill="#f0f0f0"/>
<circle cx="137.9" cy="750.4" r="1.700" fill="#f0f0f0"/>
<rect x="197.6" y="688.5" width="76.0" height="64.0" fill="#fff" stroke="#e2e2e2" stroke-width="0.600"/>
<rect x="201.1" y="693.3" width="69.0" height="56.0" fill="none" stroke="#1fa56e" stroke-width="2.600" stroke-dasharray="0.100 2.400" stroke-linecap="round"/>
<rect x="201.1" y="693.3" width="69.0" height="56.0" fill="none" stroke="#1fa56e" stroke-width="1.800"/>
<rect x="202.9" y="695.5" width="65.4" height="51.7" fill="#fff" stroke="#d9352c" stroke-width="1.100"/>
<path d="M258.4 711.2 L263.2 720.8 L261.3 720.8 L265.6 730.4 L263.2 730.4 L267.2 738.4 L250.4 738.4 L253.9 730.4 L251.7 730.4 L256.0 720.8 L253.9 720.8 Z" fill="#23915c"/>
<rect x="255.5" y="739.2" width="6.500" height="7.500" fill="#7a7a7a"/><path d="M255.5 741.7 h6.500 M255.5 744.2 h6.500" stroke="#e8e8e8" stroke-width="0.700"/>
<circle cx="258.4" cy="709.0" r="2.200" fill="#f0b83a"/>
<circle cx="257.6" cy="719.2" r="0.900" fill="#e04040"/>
<circle cx="260.8" cy="726.4" r="0.900" fill="#f0d060"/>
<circle cx="256.0" cy="728.8" r="0.900" fill="#e04040"/>
<circle cx="261.6" cy="735.2" r="0.900" fill="#e04040"/>
<circle cx="254.4" cy="736.0" r="0.900" fill="#f0d060"/>
<circle cx="259.2" cy="716.0" r="0.900" fill="#f0f0f0"/>
<circle cx="161.5" cy="219.0" r="2.300" fill="none" stroke="#9adbc6" stroke-width="1.100"/><path d="M160.0 216.4 h3" stroke="#9adbc6" stroke-width="1.100"/>
<circle cx="76.0" cy="301.5" r="2.200" fill="#fff" stroke="#9c0f78" stroke-width="1.900"/>
<circle cx="158.7" cy="300.0" r="8.800" fill="#fff" style="filter:drop-shadow(0 0.500px 1.500px rgba(0,0,0,0.130))"/>
<path d="M155.0 295.4 H162.4 V304.6 L158.7 302.6 L155.0 304.6 Z" fill="none" stroke="#555" stroke-width="1.200" stroke-linejoin="round"/>
<circle cx="277.1" cy="219.0" r="2.300" fill="none" stroke="#9adbc6" stroke-width="1.100"/><path d="M275.6 216.4 h3" stroke="#9adbc6" stroke-width="1.100"/>
<circle cx="191.2" cy="301.5" r="2.200" fill="#fff" stroke="#9c0f78" stroke-width="1.900"/>
<circle cx="274.4" cy="300.0" r="8.800" fill="#fff" style="filter:drop-shadow(0 0.500px 1.500px rgba(0,0,0,0.130))"/>
<path d="M270.7 295.4 H278.1 V304.6 L274.4 302.6 L270.7 304.6 Z" fill="none" stroke="#555" stroke-width="1.200" stroke-linejoin="round"/>
<circle cx="161.5" cy="334.8" r="2.300" fill="none" stroke="#9adbc6" stroke-width="1.100"/><path d="M160.0 332.2 h3" stroke="#9adbc6" stroke-width="1.100"/>
<circle cx="76.0" cy="417.3" r="2.200" fill="#fff" stroke="#9c0f78" stroke-width="1.900"/>
<circle cx="158.7" cy="415.8" r="8.800" fill="#fff" style="filter:drop-shadow(0 0.500px 1.500px rgba(0,0,0,0.130))"/>
<path d="M155.0 411.2 H162.4 V420.4 L158.7 418.4 L155.0 420.4 Z" fill="none" stroke="#555" stroke-width="1.200" stroke-linejoin="round"/>
<circle cx="277.1" cy="334.8" r="2.300" fill="none" stroke="#9adbc6" stroke-width="1.100"/><path d="M275.6 332.2 h3" stroke="#9adbc6" stroke-width="1.100"/>
<circle cx="274.4" cy="415.8" r="8.800" fill="#fff" style="filter:drop-shadow(0 0.500px 1.500px rgba(0,0,0,0.130))"/>
<path d="M270.7 411.2 H278.1 V420.4 L274.4 418.4 L270.7 420.4 Z" fill="none" stroke="#555" stroke-width="1.200" stroke-linejoin="round"/>
<circle cx="161.5" cy="450.6" r="2.300" fill="none" stroke="#9adbc6" stroke-width="1.100"/><path d="M160.0 448.0 h3" stroke="#9adbc6" stroke-width="1.100"/>
<circle cx="158.7" cy="531.6" r="8.800" fill="#fff" style="filter:drop-shadow(0 0.500px 1.500px rgba(0,0,0,0.130))"/>
<path d="M155.0 527.0 H162.4 V536.2 L158.7 534.2 L155.0 536.2 Z" fill="none" stroke="#555" stroke-width="1.200" stroke-linejoin="round"/>
<circle cx="277.1" cy="450.6" r="2.300" fill="none" stroke="#9adbc6" stroke-width="1.100"/><path d="M275.6 448.0 h3" stroke="#9adbc6" stroke-width="1.100"/>
<circle cx="191.2" cy="533.1" r="2.200" fill="#fff" stroke="#9c0f78" stroke-width="1.900"/>
<circle cx="274.4" cy="531.6" r="8.800" fill="#fff" style="filter:drop-shadow(0 0.500px 1.500px rgba(0,0,0,0.130))"/>
<path d="M270.7 527.0 H278.1 V536.2 L274.4 534.2 L270.7 536.2 Z" fill="none" stroke="#555" stroke-width="1.200" stroke-linejoin="round"/>
<circle cx="161.5" cy="566.4" r="2.300" fill="none" stroke="#9adbc6" stroke-width="1.100"/><path d="M160.0 563.8 h3" stroke="#9adbc6" stroke-width="1.100"/>
<circle cx="76.0" cy="648.9" r="2.200" fill="#fff" stroke="#9c0f78" stroke-width="1.900"/>
<circle cx="158.7" cy="647.4" r="8.800" fill="#fff" style="filter:drop-shadow(0 0.500px 1.500px rgba(0,0,0,0.130))"/>
<path d="M155.0 642.8 H162.4 V652.0 L158.7 650.0 L155.0 652.0 Z" fill="none" stroke="#555" stroke-width="1.200" stroke-linejoin="round"/>
<circle cx="277.1" cy="566.4" r="2.300" fill="none" stroke="#9adbc6" stroke-width="1.100"/><path d="M275.6 563.8 h3" stroke="#9adbc6" stroke-width="1.100"/>
<circle cx="274.4" cy="647.4" r="8.800" fill="#fff" style="filter:drop-shadow(0 0.500px 1.500px rgba(0,0,0,0.130))"/>
<path d="M270.7 642.8 H278.1 V652.0 L274.4 650.0 L270.7 652.0 Z" fill="none" stroke="#555" stroke-width="1.200" stroke-linejoin="round"/>
<circle cx="161.5" cy="682.2" r="2.300" fill="none" stroke="#9adbc6" stroke-width="1.100"/><path d="M160.0 679.6 h3" stroke="#9adbc6" stroke-width="1.100"/>
<circle cx="158.7" cy="763.2" r="8.800" fill="#fff" style="filter:drop-shadow(0 0.500px 1.500px rgba(0,0,0,0.130))"/>
<path d="M155.0 758.6 H162.4 V767.8 L158.7 765.8 L155.0 767.8 Z" fill="none" stroke="#555" stroke-width="1.200" stroke-linejoin="round"/>
<circle cx="277.1" cy="682.2" r="2.300" fill="none" stroke="#9adbc6" stroke-width="1.100"/><path d="M275.6 679.6 h3" stroke="#9adbc6" stroke-width="1.100"/>
<circle cx="191.2" cy="764.7" r="2.200" fill="#fff" stroke="#9c0f78" stroke-width="1.900"/>
<circle cx="274.4" cy="763.2" r="8.800" fill="#fff" style="filter:drop-shadow(0 0.500px 1.500px rgba(0,0,0,0.130))"/>
<path d="M270.7 758.6 H278.1 V767.8 L274.4 765.8 L270.7 767.8 Z" fill="none" stroke="#555" stroke-width="1.200" stroke-linejoin="round"/>
</svg>
<!-- /CARDS -->
<div id="pscroll" class="abs"></div>
<div id="pthumb" class="abs"></div>
<!-- CANVAS -->
<div id="toolbar" class="abs"></div>
<svg style="left:333px;top:96.500px" width="15" height="12" viewBox="0 0 15 12"><path d="M4.200 0.800 L0.900 3.900 L4.200 7 M1.200 3.900 H9.800 Q13.800 3.900 13.800 7.300 Q13.800 10.800 9.800 10.800 H5.500" fill="none" stroke="#222" stroke-width="1.100" stroke-linejoin="round" stroke-linecap="round" stroke-width="1.300"/></svg>
<svg style="left:362px;top:96.500px" width="15" height="12" viewBox="0 0 15 12"><path d="M10.800 0.800 L14.100 3.900 L10.800 7 M13.800 3.900 H5.200 Q1.200 3.900 1.200 7.300 Q1.200 10.800 5.200 10.800 H9.500" fill="none" stroke="#bdbdbd" stroke-width="1.300" stroke-linejoin="round" stroke-linecap="round"/></svg>
<div class="sep" style="left:390.5px"></div>
<div class="t tl" style="left:402.5px;top:87.500px;color:#555">Operation</div>
<div class="abs" style="left:402.500px;top:99px;width:66px;height:14px;border:1px solid #dedede;border-radius:2px;background:#fff"></div>
<div class="t" style="left:407px;top:102px;font-size:8px;color:#555">Basic Cut</div>
<svg style="left:459.8px;top:103px" width="5" height="4"><path d="M0 0.500 H5 L2.500 3.700 Z" fill="#222"/></svg>
<div class="abs" style="left:473px;top:99.500px;width:14px;height:13.500px;border:1px solid #dedede;border-radius:2px;background:#fff"></div>
<div class="t" style="left:473px;width:14px;text-align:center;top:102.500px;font-size:8px;color:#888">?</div>
<div class="sep" style="left:498px"></div>
<div class="t tl" style="left:511.5px;top:87.500px;color:#555">Deselect</div>
<svg style="left:520.500px;top:98px" width="15" height="15" viewBox="0 0 15 15"><rect x="1.500" y="1.500" width="12" height="12" rx="2.500" fill="none" stroke="#222" stroke-width="1.300" stroke-dasharray="2.200 1.800"/><path d="M6 5.200 L11.800 7.800 L9.300 8.800 L8.300 11.500 Z" fill="#222"/></svg>
<div class="t tl" style="left:560px;top:87.500px;color:#555">Edit</div>
<svg style="left:557px;top:98.5px" width="14" height="14" viewBox="0 0 14 14"><path d="M1.200 12.800 L2.200 8.800 L9.800 1.200 Q10.600 0.600 11.400 1.200 L12.800 2.600 Q13.400 3.400 12.800 4.200 L5.200 11.800 Z M8.400 2.600 L11.400 5.600" fill="none" stroke="#222" stroke-width="1.100" stroke-linejoin="round" stroke-linecap="round"/></svg>
<svg style="left:573.2px;top:104px" width="5" height="4"><path d="M0 0.500 H5 L2.500 3.700 Z" fill="#222"/></svg>
<div class="sep" style="left:589px"></div>
<div class="t tl" style="left:596.5px;top:87.500px;color:#bbb">Align</div>
<svg style="left:597px;top:99px" width="13" height="13" viewBox="0 0 13 13"><path d="M1 0.500 V12.500" stroke="#bbb" stroke-width="1.100"/><rect x="3.200" y="4.600" width="7.600" height="4" fill="none" stroke="#bbb" stroke-width="1.100"/></svg>
<svg style="left:611.5px;top:104px" width="5" height="4"><path d="M0 0.500 H5 L2.500 3.700 Z" fill="#bbb"/></svg>
<div class="t tl" style="left:627.5px;top:87.500px;color:#555">Arrange</div>
<svg style="left:633px;top:98.5px" width="14" height="14" viewBox="0 0 14 14"><rect x="1.300" y="1.300" width="6" height="6" rx="1" fill="none" stroke="#222" stroke-width="1.100" stroke-linejoin="round" stroke-linecap="round"/><rect x="4" y="4" width="6" height="6" rx="1" fill="#fff" stroke="#222" stroke-width="1.100"/><path d="M12.300 7 V11.400 Q12.300 12.400 11.300 12.400 H7" fill="none" stroke="#222" stroke-width="1.100" stroke-linejoin="round" stroke-linecap="round"/></svg>
<svg style="left:648.5px;top:104px" width="5" height="4"><path d="M0 0.500 H5 L2.500 3.700 Z" fill="#222"/></svg>
<div class="t tl" style="left:679px;top:87.500px;color:#555">Flip</div>
<svg style="left:676px;top:98.5px" width="13" height="14" viewBox="0 0 13 14"><path d="M5 1.500 V12.500 H0.800 Z" fill="none" stroke="#222" stroke-width="1.100" stroke-linejoin="round" stroke-linecap="round"/><path d="M8 1.500 V12.500 H12.200 Z" fill="#999" stroke="#222" stroke-width="1.100" stroke-linejoin="round"/></svg>
<svg style="left:691.5px;top:104px" width="5" height="4"><path d="M0 0.500 H5 L2.500 3.700 Z" fill="#222"/></svg>
<div class="sep" style="left:707.3px"></div>
<div class="t tl" style="left:720px;top:87.500px;color:#555">Offset</div>
<svg style="left:720.500px;top:98px" width="15" height="15" viewBox="0 0 15 15"><circle cx="7.500" cy="7.500" r="3.200" fill="none" stroke="#222" stroke-width="1.100" stroke-linejoin="round" stroke-linecap="round"/><circle cx="7.500" cy="7.500" r="6.300" fill="none" stroke="#222" stroke-width="1.200" stroke-dasharray="1.600 1.700"/></svg>
<svg style="left:736.5px;top:104px" width="5" height="4"><path d="M0 0.500 H5 L2.500 3.700 Z" fill="#222"/></svg>
<div class="sep" style="left:753.3px"></div>
<div class="t tl" style="left:765.5px;top:87.500px;color:#555">Create Sticker</div>
<svg style="left:780px;top:98px" width="17" height="16" viewBox="0 0 17 16"><path d="M8.200 14.600 Q1.400 14.600 1.400 8 Q1.400 1.400 8.400 1.400 Q15.400 1.400 15.400 7.400 Q11.500 6.500 9.600 8.800 Q7.800 11 8.200 14.600 Q13.500 13 15.400 7.400" fill="none" stroke="#222" stroke-width="1.100" stroke-linejoin="round" stroke-linecap="round" stroke-width="1.300"/></svg>
<svg style="left:798.8px;top:105px" width="5" height="4"><path d="M0 0.500 H5 L2.500 3.700 Z" fill="#222"/></svg>
<div class="sep" style="left:828.8px"></div>
<div class="t tl" style="left:843.7px;top:87.500px;color:#555">Warp</div>
<svg style="left:842.500px;top:101.5px" width="17" height="11" viewBox="0 0 17 11"><path d="M1 1 Q8.500 3.200 16 1 V10 Q8.500 7.800 1 10 Z M6 2.200 V8.800 M11 2.200 V8.800" fill="none" stroke="#222" stroke-width="1.100" stroke-linejoin="round" stroke-linecap="round" stroke-width="1.200"/></svg>
<svg style="left:861.1px;top:104.5px" width="5" height="4"><path d="M0 0.500 H5 L2.500 3.700 Z" fill="#222"/></svg>
<div class="sep" style="left:877.4px"></div>
<div class="t tl" style="left:889.5px;top:87.500px;color:#555">Size</div>
<div class="t" style="left:889.500px;top:102.500px;font-size:7.500px;color:#666">W</div>
<div class="abs" style="left:900px;top:99px;width:44.5px;height:14px;border:1px solid #dedede;border-radius:2px;background:#fff"></div>
<div class="t" style="left:904.5px;top:102px;font-size:8.500px;color:#555">8.5</div>
<svg style="left:937.0px;top:101.5px" width="5" height="9"><path d="M2.500 0 L5 3.500 H0 Z M0 5.500 H5 L2.500 9 Z" fill="#222"/></svg>
<div class="abs" style="left:946px;top:94.500px;width:20px;height:6px;border:1px solid #dedede;border-bottom:none"></div>
<div class="abs" style="left:950.500px;top:90px;width:11px;height:10px;background:#fff"></div><svg style="left:951.500px;top:88.500px" width="9" height="11" viewBox="0 0 9 11"><rect x="0.800" y="4.200" width="7.400" height="6" rx="1" fill="none" stroke="#222" stroke-width="1.100" stroke-linejoin="round" stroke-linecap="round" stroke-width="1.200"/><path d="M2.400 4.200 V2.800 Q2.400 0.800 4.500 0.800 Q6.600 0.800 6.600 2.800 V4.200" fill="none" stroke="#222" stroke-width="1.100" stroke-linejoin="round" stroke-linecap="round" stroke-width="1.200"/><circle cx="4.500" cy="7.200" r="0.800" fill="#222"/></svg>
<div class="t" style="left:956.500px;top:102.500px;font-size:7.500px;color:#666">H</div>
<div class="abs" style="left:965.5px;top:99px;width:44px;height:14px;border:1px solid #dedede;border-radius:2px;background:#fff"></div>
<div class="t" style="left:970.0px;top:102px;font-size:8.500px;color:#555">5.5</div>
<svg style="left:1002.0px;top:101.5px" width="5" height="9"><path d="M2.500 0 L5 3.500 H0 Z M0 5.500 H5 L2.500 9 Z" fill="#222"/></svg>
<div class="sep" style="left:1021.3px"></div>
<div class="t tl" style="left:1033px;top:87.500px;color:#555">Rotate</div>
<svg style="left:1034px;top:99px" width="14" height="14" viewBox="0 0 14 14"><path d="M12.400 5.200 Q10.800 1.200 7 1.200 Q3 1.200 1.400 5 M1.600 8.800 Q3.200 12.800 7 12.800 Q11 12.800 12.600 9" fill="none" stroke="#222" stroke-width="1.100" stroke-linejoin="round" stroke-linecap="round" stroke-width="1.300"/><path d="M12.800 1.800 V5.400 H9.400 M1.200 12.200 V8.600 H4.600" fill="none" stroke="#222" stroke-width="1.100" stroke-linejoin="round" stroke-linecap="round" stroke-width="1.300"/></svg>
<div class="abs" style="left:1052.4px;top:100px;width:44px;height:14px;border:1px solid #dedede;border-radius:2px;background:#fff"></div>
<div class="t" style="left:1056.9px;top:103px;font-size:8.500px;color:#555">0</div>
<svg style="left:1088.9px;top:102.5px" width="5" height="9"><path d="M2.500 0 L5 3.500 H0 Z M0 5.500 H5 L2.500 9 Z" fill="#222"/></svg>
<div class="sep" style="left:1107.2px"></div>
<div class="t tl" style="left:1114px;top:87.500px;color:#555">Position</div>
<div class="t" style="left:1114px;top:102.500px;font-size:7.500px;color:#666">X</div>
<div class="abs" style="left:1122.9px;top:99px;width:44px;height:14px;border:1px solid #dedede;border-radius:2px;background:#fff"></div>
<div class="t" style="left:1127.4px;top:102px;font-size:8.500px;color:#555">1.486</div>
<svg style="left:1159.4px;top:101.5px" width="5" height="9"><path d="M2.500 0 L5 3.500 H0 Z M0 5.500 H5 L2.500 9 Z" fill="#222"/></svg>
<div class="t" style="left:1176px;top:102.500px;font-size:7.500px;color:#666">Y</div>
<div class="abs" style="left:1184px;top:99px;width:44px;height:14px;border:1px solid #dedede;border-radius:2px;background:#fff"></div>
<div class="t" style="left:1188.5px;top:102px;font-size:8.500px;color:#555">0.667</div>
<svg style="left:1220.5px;top:101.5px" width="5" height="9"><path d="M2.500 0 L5 3.500 H0 Z M0 5.500 H5 L2.500 9 Z" fill="#222"/></svg>
<div class="abs" style="left:317px;top:81px;width:2.500px;height:757px;background:#e2e2e2"></div>
<div id="hruler" class="abs"></div>
<div id="vruler" class="abs"></div>
<div class="abs" style="left:319px;top:119.500px;width:944px;height:1px;background:#d8d8d8"></div>
<svg style="left:0;top:0" width="1500" height="838"><path d="M337.3 121 V138 M393.7 121 V138 M450.0 121 V138 M506.4 121 V138 M562.7 121 V138 M619.0 121 V138 M675.4 121 V138 M731.8 121 V138 M788.1 121 V138 M844.5 121 V138 M900.8 121 V138 M957.2 121 V138 M1013.5 121 V138 M1069.9 121 V138 M1126.2 121 V138 M1182.5 121 V138 M1238.9 121 V138 M320 138.3 H337 M320 194.7 H337 M320 251.0 H337 M320 307.4 H337 M320 363.7 H337 M320 420.1 H337 M320 476.4 H337 M320 532.8 H337 M320 589.1 H337 M320 645.5 H337 M320 701.8 H337 M320 758.2 H337 M320 814.5 H337 " stroke="#d9d9d9" stroke-width="1"/><path d="M344.3 135.5 V138 M351.4 134.5 V138 M358.4 135.5 V138 M365.5 133 V138 M372.5 135.5 V138 M379.6 134.5 V138 M386.6 135.5 V138 M400.7 135.5 V138 M407.7 134.5 V138 M414.8 135.5 V138 M421.8 133 V138 M428.9 135.5 V138 M435.9 134.5 V138 M443.0 135.5 V138 M457.0 135.5 V138 M464.1 134.5 V138 M471.1 135.5 V138 M478.2 133 V138 M485.2 135.5 V138 M492.3 134.5 V138 M499.3 135.5 V138 M513.4 135.5 V138 M520.4 134.5 V138 M527.5 135.5 V138 M534.5 133 V138 M541.6 135.5 V138 M548.6 134.5 V138 M555.7 135.5 V138 M569.7 135.5 V138 M576.8 134.5 V138 M583.8 135.5 V138 M590.9 133 V138 M597.9 135.5 V138 M605.0 134.5 V138 M612.0 135.5 V138 M626.1 135.5 V138 M633.1 134.5 V138 M640.2 135.5 V138 M647.2 133 V138 M654.3 135.5 V138 M661.3 134.5 V138 M668.4 135.5 V138 M682.4 135.5 V138 M689.5 134.5 V138 M696.5 135.5 V138 M703.6 133 V138 M710.6 135.5 V138 M717.7 134.5 V138 M724.7 135.5 V138 M738.8 135.5 V138 M745.8 134.5 V138 M752.9 135.5 V138 M759.9 133 V138 M767.0 135.5 V138 M774.0 134.5 V138 M781.1 135.5 V138 M795.1 135.5 V138 M802.2 134.5 V138 M809.2 135.5 V138 M816.3 133 V138 M823.3 135.5 V138 M830.4 134.5 V138 M837.4 135.5 V138 M851.5 135.5 V138 M858.5 134.5 V138 M865.6 135.5 V138 M872.6 133 V138 M879.7 135.5 V138 M886.7 134.5 V138 M893.8 135.5 V138 M907.8 135.5 V138 M914.9 134.5 V138 M921.9 135.5 V138 M929.0 133 V138 M936.0 135.5 V138 M943.1 134.5 V138 M950.1 135.5 V138 M964.2 135.5 V138 M971.2 134.5 V138 M978.3 135.5 V138 M985.3 133 V138 M992.4 135.5 V138 M999.4 134.5 V138 M1006.5 135.5 V138 M1020.5 135.5 V138 M1027.6 134.5 V138 M1034.6 135.5 V138 M1041.7 133 V138 M1048.7 135.5 V138 M1055.8 134.5 V138 M1062.8 135.5 V138 M1076.9 135.5 V138 M1083.9 134.5 V138 M1091.0 135.5 V138 M1098.0 133 V138 M1105.1 135.5 V138 M1112.1 134.5 V138 M1119.2 135.5 V138 M1133.2 135.5 V138 M1140.3 134.5 V138 M1147.3 135.5 V138 M1154.4 133 V138 M1161.4 135.5 V138 M1168.5 134.5 V138 M1175.5 135.5 V138 M1189.6 135.5 V138 M1196.6 134.5 V138 M1203.7 135.5 V138 M1210.7 133 V138 M1217.8 135.5 V138 M1224.8 134.5 V138 M1231.9 135.5 V138 M1245.9 135.5 V138 M334.5 145.3 H337 M333.5 152.4 H337 M334.5 159.4 H337 M332 166.5 H337 M334.5 173.5 H337 M333.5 180.6 H337 M334.5 187.6 H337 M334.5 201.7 H337 M333.5 208.7 H337 M334.5 215.8 H337 M332 222.8 H337 M334.5 229.9 H337 M333.5 236.9 H337 M334.5 244.0 H337 M334.5 258.0 H337 M333.5 265.1 H337 M334.5 272.1 H337 M332 279.2 H337 M334.5 286.2 H337 M333.5 293.3 H337 M334.5 300.3 H337 M334.5 314.4 H337 M333.5 321.4 H337 M334.5 328.5 H337 M332 335.5 H337 M334.5 342.6 H337 M333.5 349.6 H337 M334.5 356.7 H337 M334.5 370.7 H337 M333.5 377.8 H337 M334.5 384.8 H337 M332 391.9 H337 M334.5 398.9 H337 M333.5 406.0 H337 M334.5 413.0 H337 M334.5 427.1 H337 M333.5 434.1 H337 M334.5 441.2 H337 M332 448.2 H337 M334.5 455.3 H337 M333.5 462.3 H337 M334.5 469.4 H337 M334.5 483.4 H337 M333.5 490.5 H337 M334.5 497.5 H337 M332 504.6 H337 M334.5 511.6 H337 M333.5 518.7 H337 M334.5 525.7 H337 M334.5 539.8 H337 M333.5 546.8 H337 M334.5 553.9 H337 M332 560.9 H337 M334.5 568.0 H337 M333.5 575.0 H337 M334.5 582.1 H337 M334.5 596.1 H337 M333.5 603.2 H337 M334.5 610.2 H337 M332 617.3 H337 M334.5 624.3 H337 M333.5 631.4 H337 M334.5 638.4 H337 M334.5 652.5 H337 M333.5 659.5 H337 M334.5 666.6 H337 M332 673.6 H337 M334.5 680.7 H337 M333.5 687.7 H337 M334.5 694.8 H337 M334.5 708.8 H337 M333.5 715.9 H337 M334.5 722.9 H337 M332 730.0 H337 M334.5 737.0 H337 M333.5 744.1 H337 M334.5 751.1 H337 M334.5 765.2 H337 M333.5 772.2 H337 M334.5 779.3 H337 M332 786.3 H337 M334.5 793.4 H337 M333.5 800.4 H337 M334.5 807.5 H337 M334.5 821.5 H337 " stroke="#e3e3e3" stroke-width="0.800"/><text x="340.6" y="130.200" font-size="8.300" fill="#6a6a6a" font-family="Liberation Sans, sans-serif">0</text><text x="397.0" y="130.200" font-size="8.300" fill="#6a6a6a" font-family="Liberation Sans, sans-serif">1</text><text x="453.3" y="130.200" font-size="8.300" fill="#6a6a6a" font-family="Liberation Sans, sans-serif">2</text><text x="509.7" y="130.200" font-size="8.300" fill="#6a6a6a" font-family="Liberation Sans, sans-serif">3</text><text x="566.0" y="130.200" font-size="8.300" fill="#6a6a6a" font-family="Liberation Sans, sans-serif">4</text><text x="622.3" y="130.200" font-size="8.300" fill="#6a6a6a" font-family="Liberation Sans, sans-serif">5</text><text x="678.7" y="130.200" font-size="8.300" fill="#6a6a6a" font-family="Liberation Sans, sans-serif">6</text><text x="735.0" y="130.200" font-size="8.300" fill="#6a6a6a" font-family="Liberation Sans, sans-serif">7</text><text x="791.4" y="130.200" font-size="8.300" fill="#6a6a6a" font-family="Liberation Sans, sans-serif">8</text><text x="847.8" y="130.200" font-size="8.300" fill="#6a6a6a" font-family="Liberation Sans, sans-serif">9</text><text x="904.1" y="130.200" font-size="8.300" fill="#6a6a6a" font-family="Liberation Sans, sans-serif">10</text><text x="960.5" y="130.200" font-size="8.300" fill="#6a6a6a" font-family="Liberation Sans, sans-serif">11</text><text x="1016.8" y="130.200" font-size="8.300" fill="#6a6a6a" font-family="Liberation Sans, sans-serif">12</text><text x="1073.2" y="130.200" font-size="8.300" fill="#6a6a6a" font-family="Liberation Sans, sans-serif">13</text><text x="1129.5" y="130.200" font-size="8.300" fill="#6a6a6a" font-family="Liberation Sans, sans-serif">14</text><text x="1185.8" y="130.200" font-size="8.300" fill="#6a6a6a" font-family="Liberation Sans, sans-serif">15</text><text x="1242.2" y="130.200" font-size="8.300" fill="#6a6a6a" font-family="Liberation Sans, sans-serif">16</text><text transform="translate(328,146.2) rotate(-90)" font-size="8.300" fill="#6a6a6a" font-family="Liberation Sans, sans-serif">0</text><text transform="translate(329.800,202.6) rotate(-90)" font-size="8.300" fill="#6a6a6a" font-family="Liberation Sans, sans-serif">1</text><text transform="translate(329.800,258.9) rotate(-90)" font-size="8.300" fill="#6a6a6a" font-family="Liberation Sans, sans-serif">2</text><text transform="translate(329.800,315.3) rotate(-90)" font-size="8.300" fill="#6a6a6a" font-family="Liberation Sans, sans-serif">3</text><text transform="translate(329.800,371.6) rotate(-90)" font-size="8.300" fill="#6a6a6a" font-family="Liberation Sans, sans-serif">4</text><text transform="translate(329.800,428.0) rotate(-90)" font-size="8.300" fill="#6a6a6a" font-family="Liberation Sans, sans-serif">5</text><text transform="translate(329.800,484.3) rotate(-90)" font-size="8.300" fill="#6a6a6a" font-family="Liberation Sans, sans-serif">6</text><text transform="translate(329.800,540.6) rotate(-90)" font-size="8.300" fill="#6a6a6a" font-family="Liberation Sans, sans-serif">7</text><text transform="translate(329.800,597.0) rotate(-90)" font-size="8.300" fill="#6a6a6a" font-family="Liberation Sans, sans-serif">8</text><text transform="translate(329.800,653.4) rotate(-90)" font-size="8.300" fill="#6a6a6a" font-family="Liberation Sans, sans-serif">9</text><text transform="translate(329.800,714.3) rotate(-90)" font-size="8.300" fill="#6a6a6a" font-family="Liberation Sans, sans-serif">10</text><text transform="translate(329.800,770.7) rotate(-90)" font-size="8.300" fill="#6a6a6a" font-family="Liberation Sans, sans-serif">11</text></svg>
<div class="abs" style="left:1249px;top:120px;width:14.500px;height:718px;background:#f1f1f1"></div>
<div class="abs" style="left:1250.500px;top:133.500px;width:11.500px;height:33.500px;background:#c1c1c1"></div>
<svg style="left:1252.500px;top:124.500px" width="7" height="4"><path d="M0 4 H7 L3.500 0 Z" fill="#8a8a8a"/></svg>
<svg style="left:1252.500px;top:818.500px" width="7" height="4"><path d="M0 0 H7 L3.500 4 Z" fill="#505050"/></svg>
<div class="abs" style="left:319px;top:827.500px;width:944px;height:10.500px;background:#f1f1f1"></div>
<div class="abs" style="left:334px;top:828px;width:57px;height:10px;background:#c1c1c1"></div>
<svg style="left:324px;top:829.500px" width="4" height="7"><path d="M4 0 V7 L0 3.500 Z" fill="#8a8a8a"/></svg>
<svg style="left:1240px;top:829.500px" width="4" height="7"><path d="M0 0 V7 L4 3.500 Z" fill="#222"/></svg>
<div class="abs" style="left:1249px;top:827.500px;width:14.500px;height:10.500px;background:#dedede"></div>
<!-- ARTWORK -->
<svg style="left:0;top:0" width="1500" height="838">
<rect x="421" y="176" width="239" height="309" fill="#f8f8f8"/>
<rect x="659.700" y="176" width="238.800" height="308.500" fill="#0c0b09"/>
<path d="M825.4 441.2 C824.5 442.8 822.2 447.6 820.0 451.0 C817.8 454.3 814.9 458.6 812.2 461.5 C809.6 464.4 807.5 466.6 804.1 468.6 C800.8 470.6 796.0 472.7 792.0 473.3 C787.9 473.9 783.5 473.4 779.8 472.3 C776.1 471.1 772.9 468.7 769.7 466.2 C766.4 463.6 763.6 459.7 760.5 457.0 C757.5 454.3 754.6 451.7 751.4 449.9 C748.2 448.2 744.6 447.0 741.3 446.5 C737.9 446.0 735.2 446.3 731.1 446.9 C727.1 447.5 721.7 449.1 716.9 449.9 C712.2 450.8 707.1 452.1 702.7 452.0 C698.3 451.8 693.9 450.5 690.6 448.9 C687.2 447.4 684.6 445.6 682.4 442.8 C680.3 440.1 678.5 436.4 677.4 432.7 C676.3 429.0 675.9 424.6 676.0 420.5 C676.1 416.5 676.7 412.4 678.0 408.4 C679.2 404.3 681.5 400.3 683.5 396.2 C685.4 392.1 688.0 388.8 689.5 384.0 C691.1 379.3 692.3 374.3 693.0 367.8 C693.7 361.4 694.1 352.4 694.0 345.3 C693.9 338.2 693.0 329.4 692.6 325.0 C692.2 320.7 692.3 322.8 691.6 319.1 C690.9 315.4 689.9 308.3 688.5 302.9 C687.2 297.5 685.2 292.1 683.5 286.7 C681.8 281.3 679.6 276.5 678.4 270.5 C677.1 264.4 676.0 255.8 676.0 250.2 C676.0 244.6 676.8 240.4 678.4 237.0 C680.0 233.5 682.4 231.4 685.5 229.5 C688.5 227.6 691.4 226.2 696.6 225.4 C701.9 224.7 710.2 225.3 716.9 225.0 C723.7 224.8 731.5 225.9 737.2 223.8 C743.0 221.8 747.0 216.8 751.4 212.7 C755.8 208.5 759.3 202.9 763.6 199.1 C767.8 195.3 772.4 191.8 776.8 189.7 C781.1 187.7 785.5 186.9 789.9 186.9 C794.3 186.9 799.3 187.9 803.1 189.7 C806.9 191.6 809.6 194.5 812.7 197.9 C815.7 201.2 818.4 206.0 821.4 210.0 C824.3 214.0 826.8 218.0 830.5 221.8 C834.2 225.5 838.6 229.0 843.7 232.5 C848.8 236.1 855.7 239.8 860.9 243.1 C866.2 246.4 871.6 249.0 875.1 252.2 C878.7 255.4 880.7 258.6 882.2 262.3 C883.7 266.1 884.4 269.8 884.2 274.5 C884.1 279.2 883.1 285.3 881.2 290.7 C879.3 296.1 875.7 301.6 873.1 307.0 C870.5 312.4 867.4 317.8 865.4 323.2 C863.4 328.6 861.6 334.7 860.9 339.4 C860.2 344.1 860.7 347.7 861.3 351.6 C862.0 355.5 863.4 358.7 865.0 362.7 C866.6 366.8 868.4 370.4 871.1 375.9 C873.7 381.5 879.2 392.7 880.8 396.0 L832.5 396.0 Z" fill="#f99e2c"/>
<path d="M716.9 379.8 L704.8 389.9 L716.9 392.9 L687.5 408.2 L710.8 410.2 L696.6 425.4 L726.1 421.3 L720.0 438.6 L743.3 431.5 L741.3 440.6 L768.6 434.5 L763.6 442.6 L781.8 438.6 L803.1 439.6 L814.3 442.6 L810.2 436.5 L825.4 441.6 L852.8 416.3 L880.8 396.4 L876.7 392.9 L870.0 385.8 L863.4 378.1 L852.8 375.7 L771.7 375.7 Z" fill="#0c0b09"/>
<path d="M782.8 437.6 L802.1 438.6 L803.7 467.4 L792.0 472.6 L780.8 472.0 Z" fill="#742878"/>
<path d="M844.7 325.0 L852.8 333.1 L866.0 340.2 L850.8 347.3 L873.1 363.5 L854.8 368.6 L861.9 378.7 L849.8 388.9 L841.7 376.7 L826.4 390.9 L818.3 381.8 L810.2 397.0 L804.1 389.9 L796.0 395.0 L789.9 389.9 L776.8 399.0 L771.7 387.9 L761.5 394.0 L760.5 385.8 L739.2 389.9 L737.2 380.8 L712.9 380.8 L727.1 368.6 L703.7 361.5 L728.1 348.3 L719.0 343.3 L735.2 331.1 L732.0 341.1 L781.9 317.5 L840.9 317.5 Z" fill="#742878"/>
<path d="M745.1 279.4 L753.0 277.5 L759.6 273.5 L758.3 282.7 L768.8 278.1 L775.3 276.2 L787.1 272.9 L787.1 268.7 L801.6 268.3 L804.2 270.3 L812.1 275.5 L821.3 282.1 L833.1 285.3 L822.6 291.3 L831.8 297.8 L842.3 300.4 L833.1 309.6 L843.6 317.5 L816.0 318.8 L827.8 326.7 L809.4 328.0 L814.7 334.6 L800.3 333.3 L800.9 340.5 L791.1 334.6 L783.2 336.5 L778.6 344.4 L774.0 333.3 L768.8 336.5 L758.3 343.8 L755.6 336.5 L745.1 339.8 L732.0 341.1 L737.9 329.3 L730.7 330.0 L735.3 321.4 L722.2 317.5 L733.3 309.6 L740.5 302.4 L732.0 301.1 L738.6 295.2 L742.5 287.3 Z" fill="#0c0b09"/>
<path d="M747.8 217.0 L755.6 219.6 L763.5 226.2 L774.0 232.8 L784.5 237.3 L795.0 240.0 L802.9 240.2 L795.7 249.2 L802.9 253.1 L798.9 257.0 L811.4 264.9 L804.2 266.9 L792.4 268.8 L791.7 276.1 L780.6 274.8 L775.3 275.4 L767.4 280.0 L761.5 283.3 L758.9 274.8 L755.6 276.7 L747.8 280.0 L745.8 277.4 L739.9 280.0 L737.9 274.8 L728.1 271.5 L734.6 262.9 L739.2 252.4 L741.8 240.6 L741.2 228.8 Z" fill="#742878"/>
<path d="M726.1 187.5 L740.5 193.4 L753.9 187.5 L752.7 204.5 L762.2 213.1 L747.8 217.0 L740.5 228.8 L734.0 217.0 L718.2 213.1 L728.7 204.5 Z" fill="#8cc63f"/>
<path d="M753.0 294.5 L759.6 295.5 L768.1 299.4 L763.5 301.4 L758.5 300.2 Z M791.1 286.7 L791.9 293.2 L787.1 297.8 L778.6 297.8 L784.8 292.8 Z M749.1 307.7 L753.0 314.2 L758.3 318.2 L762.8 320.8 L766.1 318.8 L770.1 322.1 L774.7 319.5 L779.3 321.4 L783.2 318.2 L787.1 319.5 L790.4 315.5 L795.0 316.8 L796.3 312.3 L800.3 310.9 L801.0 303.1 L799.6 293.2 L798.3 304.4 L795.0 310.3 L793.7 306.3 L790.4 310.9 L787.8 307.7 L785.2 312.9 L781.9 310.3 L779.3 315.5 L775.3 312.3 L772.0 316.8 L768.1 314.2 L764.8 317.5 L761.5 314.9 L758.3 316.8 L754.3 312.3 Z" fill="#8cc63f"/>
<g fill="#0c0b09"><circle cx="788.9" cy="197.0" r="2.800"/><circle cx="720.0" cy="240.0" r="2.800"/><circle cx="815.7" cy="240.0" r="2.800"/><circle cx="855.2" cy="249.2" r="2.800"/><circle cx="874.1" cy="273.1" r="2.800"/><circle cx="708.8" cy="307.6" r="2.800"/><path d="M693.6 240.0 L695.3 243.4 L698.7 245.1 L695.3 246.8 L693.6 250.2 L691.9 246.8 L688.5 245.1 L691.9 243.4 Z M857.9 293.2 L859.6 296.5 L862.9 298.2 L859.6 300.0 L857.9 303.3 L856.2 300.0 L852.8 298.2 L856.2 296.5 Z M704.4 264.2 L705.5 272.7 L708.7 271.2 L707.2 274.4 L715.7 275.5 L707.2 276.7 L708.7 279.8 L705.5 278.3 L704.4 286.9 L703.2 278.3 L700.1 279.8 L701.5 276.7 L693.0 275.5 L701.5 274.4 L700.1 271.2 L703.2 272.7 Z M783.4 209.9 L783.9 214.3 L788.3 214.1 L784.8 216.8 L787.2 220.5 L783.1 218.8 L781.1 222.7 L780.5 218.3 L776.1 218.5 L779.6 215.9 L777.3 212.1 L781.3 213.8 Z M831.6 257.4 L832.2 261.7 L836.6 261.5 L833.1 264.2 L835.5 267.9 L831.4 266.2 L829.4 270.2 L828.8 265.8 L824.4 266.0 L827.9 263.3 L825.5 259.6 L829.6 261.3 Z M816.8 200.6 L815.8 206.5 L821.6 205.0 L816.7 208.5 L821.9 211.5 L816.0 210.5 L817.5 216.3 L814.0 211.4 L811.0 216.6 L812.0 210.7 L806.1 212.2 L811.0 208.7 L805.9 205.7 L811.8 206.7 L810.3 200.9 L813.7 205.8 Z"/></g>
<path d="M640 329.500 H680" stroke="#9a9a9a" stroke-width="0.800"/>
<rect x="420.500" y="175.500" width="478.500" height="309.500" fill="none" stroke="#6fd0b4" stroke-width="1.100"/>
<circle cx="420.5" cy="175.5" r="3.900" fill="#fff" stroke="#2bb38c" stroke-width="1.600"/>
<circle cx="899" cy="175.5" r="3.900" fill="#fff" stroke="#2bb38c" stroke-width="1.600"/>
<circle cx="420.5" cy="485" r="3.900" fill="#fff" stroke="#2bb38c" stroke-width="1.600"/>
<circle cx="899" cy="485" r="3.900" fill="#fff" stroke="#2bb38c" stroke-width="1.600"/>
<rect x="651" y="171.5" width="18" height="8" rx="4" fill="#fff" stroke="#2bb38c" stroke-width="1.600"/>
<rect x="651" y="481" width="18" height="8" rx="4" fill="#fff" stroke="#2bb38c" stroke-width="1.600"/>
<rect x="416.5" y="321" width="8" height="18" rx="4" fill="#fff" stroke="#2bb38c" stroke-width="1.600"/>
<rect x="895" y="321" width="8" height="18" rx="4" fill="#fff" stroke="#2bb38c" stroke-width="1.600"/>
<path d="M610.700 138.500 H707.700 V157.500 Q707.700 161.700 703.500 161.700 H614.900 Q610.700 161.700 610.700 157.500 Z" fill="#0ca67c"/>
<text x="659.200" y="151.700" text-anchor="middle" font-size="10.800" font-weight="bold" fill="#fff" font-family="Liberation Sans, sans-serif" textLength="73" lengthAdjust="spacing" xml:space="preserve">8.5  in x 5.5  in</text>
<path d="M867.9 222.4 L868.2 247.0 L873.3 242.5 L877.1 250.3 L882.3 247.8 L879.2 241.4 L887.4 241.6 Z" fill="#0c0b09" stroke="#fff" stroke-width="1.300" stroke-linejoin="miter"/>
<path d="M385 352.700 L396.400 360.600 L363 406 L376 415.700 L326.500 439.500 L337.400 386.200 L351.700 396.900 Z" fill="#0f6a80"/>
<path d="M317 424 L324.500 428 Q326.800 429.200 326.800 432 V488 Q326.800 490.800 324.500 492 L317 496 Z" fill="#fff"/>
<path d="M322.500 455.800 L318.800 459.200 L322.500 462.600" fill="none" stroke="#222" stroke-width="1.300"/>
</svg>
<!-- /ARTWORK -->
<!-- RPANEL -->
<div id="rpanel" class="abs"></div>
<div class="t" style="left:1278px;top:94.500px;font-size:11px;font-weight:bold;color:#0b8a63;letter-spacing:-0.200px">Layers</div>
<div class="t" style="left:1336.500px;top:95px;font-size:11.500px;color:#777">Color Sync</div>
<div class="abs" style="left:1265px;top:117.500px;width:235px;height:1px;background:#e9e9e9"></div>
<div class="abs" style="left:1265px;top:115.500px;width:59.500px;height:2.500px;background:#0b8a63;border-radius:1px"></div>
<svg style="left:1279px;top:129px" width="16" height="15" viewBox="0 0 16 15"><path d="M3 2.200 H8 M2.400 3 V6 M9 3 V5 M3.200 7.200 H5.200 M6.600 7.800 V11.600 M13.400 7.800 V11.600 M7.600 6.600 H12.400 M7.600 12.800 H12.400" fill="none" stroke="#2a2a2a" stroke-width="1.200" stroke-linejoin="round" stroke-linecap="round"/><circle cx="2.400" cy="2.200" r="1.300" fill="none" stroke="#2a2a2a" stroke-width="1.200" stroke-linejoin="round" stroke-linecap="round"/><circle cx="9" cy="2.200" r="1.300" fill="none" stroke="#2a2a2a" stroke-width="1.200" stroke-linejoin="round" stroke-linecap="round"/><circle cx="2.400" cy="7.200" r="1.300" fill="none" stroke="#2a2a2a" stroke-width="1.200" stroke-linejoin="round" stroke-linecap="round"/><circle cx="6.600" cy="6.600" r="1.300" fill="#fff" stroke="#2a2a2a" stroke-width="1.200"/><circle cx="13.400" cy="6.600" r="1.300" fill="none" stroke="#2a2a2a" stroke-width="1.200" stroke-linejoin="round" stroke-linecap="round"/><circle cx="6.600" cy="12.800" r="1.300" fill="none" stroke="#2a2a2a" stroke-width="1.200" stroke-linejoin="round" stroke-linecap="round"/><circle cx="13.400" cy="12.800" r="1.300" fill="none" stroke="#2a2a2a" stroke-width="1.200" stroke-linejoin="round" stroke-linecap="round"/></svg>
<svg style="left:1311px;top:130px" width="15" height="15" viewBox="0 0 15 15"><path d="M3.400 10.600 H2 Q0.800 10.600 0.800 9.400 V2 Q0.800 0.800 2 0.800 H9.400 Q10.600 0.800 10.600 2 V3.400" fill="none" stroke="#2a2a2a" stroke-width="1.200" stroke-linejoin="round" stroke-linecap="round"/><rect x="3.800" y="3.800" width="10.400" height="10.400" rx="1.200" fill="none" stroke="#2a2a2a" stroke-width="1.200" stroke-linejoin="round" stroke-linecap="round"/><path d="M9 6.400 V11.600 M6.400 9 H11.600" fill="none" stroke="#2a2a2a" stroke-width="1.200" stroke-linejoin="round" stroke-linecap="round"/></svg>
<svg style="left:1342.500px;top:129.500px" width="15" height="15" viewBox="0 0 15 15"><path d="M0.800 3.400 H14.200 M5 3.400 V2 Q5 0.800 6.200 0.800 H8.800 Q10 0.800 10 2 V3.400 M2.400 3.400 L3 12.600 Q3.100 14.200 4.600 14.200 H10.400 Q11.900 14.200 12 12.600 L12.600 3.400 M6 6.400 V11 M9 6.400 V11" fill="none" stroke="#2a2a2a" stroke-width="1.200" stroke-linejoin="round" stroke-linecap="round" stroke-width="1.300"/></svg>
<div class="abs" style="left:1265px;top:156.500px;width:222px;height:607px;background:linear-gradient(#f3f3f3,#fff 5px)"></div>
<div class="abs" style="left:1486px;top:156.500px;width:14px;height:607px;background:#f4f4f4"></div>
<svg style="left:1490px;top:163.500px" width="6" height="4"><path d="M0 3.500 H6 L3 0 Z" fill="#9a9a9a"/></svg>
<svg style="left:1490px;top:755px" width="6" height="4"><path d="M0 0 H6 L3 3.500 Z" fill="#555"/></svg>
<div class="abs" style="left:1268.500px;top:160px;width:215px;height:43.500px;border-radius:3px;background:#b5ebdb"></div>
<svg style="left:1277.500px;top:176px" width="7" height="9" viewBox="0 0 7 9"><path d="M1.200 0.900 L5.400 4.500 L1.200 8.100" fill="none" stroke="#2a2a2a" stroke-width="1.200" stroke-linejoin="round" stroke-linecap="round" stroke-width="1.300"/></svg>
<svg style="left:1296px;top:173.500px" width="15" height="15" viewBox="0 0 15 15"><path d="M0.800 4.200 V2.200 Q0.800 0.800 2.200 0.800 H4.200 M10.800 0.800 H12.800 Q14.200 0.800 14.200 2.200 V4.200 M14.200 10.800 V12.800 Q14.200 14.200 12.800 14.200 H10.800 M4.200 14.200 H2.200 Q0.800 14.200 0.800 12.800 V10.800" fill="none" stroke="#2a2a2a" stroke-width="1.200" stroke-linejoin="round" stroke-linecap="round"/><rect x="3.600" y="3.600" width="5.200" height="5.200" rx="1" fill="none" stroke="#2a2a2a" stroke-width="1.200" stroke-linejoin="round" stroke-linecap="round"/><rect x="6.200" y="6.200" width="5.200" height="5.200" rx="1" fill="#b5ebdb" stroke="#2a2a2a" stroke-width="1.200"/></svg>
<div class="t" style="left:1318.500px;top:175.500px;font-size:11px;font-weight:bold;color:#3a3a3a">svg-01-halloween-tree-...</div>
<div class="abs" style="left:1265px;top:763px;width:235px;height:1px;background:#efefef"></div>
<div class="abs" style="left:1277.500px;top:775.500px;width:14.500px;height:15.500px;border:1px solid #ececec;border-radius:2px;background:#fff"></div>
<div class="t" style="left:1299px;top:779px;font-size:9.200px;color:#555;letter-spacing:0.250px">Background Color</div>
<div class="abs" style="left:1265px;top:802px;width:235px;height:1px;background:#efefef"></div>
<svg style="left:1285.500px;top:808px" width="15" height="15" viewBox="0 0 15 15"><path d="M3 3.400 V1.600 Q3 0.800 3.800 0.800 H9.400 L12.400 3.800 V10 H10.600 M1.600 4.600 H9.600 Q10.400 4.600 10.400 5.400 V13.400 Q10.400 14.200 9.600 14.200 H1.600 Q0.800 14.200 0.800 13.400 V5.400 Q0.800 4.600 1.600 4.600 Z" fill="none" stroke="#d9d9d9" stroke-width="1.200" stroke-linejoin="round" stroke-linecap="round"/></svg>
<div class="t" style="left:1270px;width:46px;text-align:center;top:828px;font-size:8px;color:#e9e9e9">Slice</div>
<svg style="left:1324px;top:808px" width="16" height="15" viewBox="0 0 16 15"><path d="M5.600 8.200 H1.800 Q0.800 8.200 0.800 7.200 V1.800 Q0.800 0.800 1.800 0.800 H8.600 Q9.600 0.800 9.600 1.800 V4.600" fill="none" stroke="#2a2a2a" stroke-width="1.200" stroke-linejoin="round" stroke-linecap="round"/><circle cx="9.600" cy="9.200" r="4.800" fill="none" stroke="#2a2a2a" stroke-width="1.200" stroke-linejoin="round" stroke-linecap="round"/></svg>
<svg style="left:1343px;top:812.500px" width="5" height="4"><path d="M0 0.300 H5 L2.500 3.500 Z" fill="#222"/></svg>
<div class="t" style="left:1312px;width:46px;text-align:center;top:828px;font-size:8px;color:#555">Combine</div>
<svg style="left:1369.500px;top:809.500px" width="17" height="11" viewBox="0 0 17 11"><path d="M13.200 7 H5 Q3.600 7 3.600 5.500 Q3.600 4 5 4 H12.400 Q16 4 16 6.800 Q16 10 12.400 10 H5 Q1 10 1 5.500 Q1 1 5 1 H12.600" fill="none" stroke="#2a2a2a" stroke-width="1.200" stroke-linejoin="round" stroke-linecap="round" stroke-width="1.300"/></svg>
<div class="t" style="left:1355px;width:46px;text-align:center;top:828px;font-size:8px;color:#555">Attach</div>
<svg style="left:1413.500px;top:807.500px" width="15" height="15" viewBox="0 0 15 15"><path d="M7.500 0.800 V6.200 M5 3.800 L7.500 6.200 L10 3.800 M1.200 7.200 L7.500 10.600 L13.800 7.200 M1.200 10.800 L7.500 14.200 L13.800 10.800" fill="none" stroke="#2a2a2a" stroke-width="1.200" stroke-linejoin="round" stroke-linecap="round" stroke-width="1.300"/></svg>
<div class="t" style="left:1397.500px;width:46px;text-align:center;top:828px;font-size:8px;color:#555">Flatten</div>
<svg style="left:1456.500px;top:808px" width="15" height="15" viewBox="0 0 15 15"><circle cx="7.500" cy="7.500" r="6.400" fill="none" stroke="#e2e2e2" stroke-width="1.200" stroke-dasharray="2.500 2"/></svg>
<div class="t" style="left:1440.500px;width:46px;text-align:center;top:828px;font-size:8px;color:#ececec">Contour</div>
<!-- WATERMARK -->
<div class="abs" style="left:344.500px;top:794.500px;width:91.500px;height:27px;border-radius:13.500px;background:#eeeeee"></div>
<svg style="left:349px;top:801px" width="16" height="16" viewBox="0 0 16 16"><circle cx="8" cy="7.800" r="6.800" fill="none" stroke="#c4c4c4" stroke-width="1.200"/><path d="M4.600 7.800 H11.400" stroke="#c4c4c4" stroke-width="1.200"/></svg>
<div class="t" style="left:370.500px;top:800px;font-size:16.500px;color:#bdbdbd;letter-spacing:-0.600px">100%</div>
<svg style="left:416px;top:801px" width="16" height="16" viewBox="0 0 16 16"><circle cx="8" cy="7.800" r="6.800" fill="none" stroke="#c4c4c4" stroke-width="1.200"/><path d="M4.600 7.800 H11.400 M8 4.400 V11.200" stroke="#c4c4c4" stroke-width="1.200"/></svg>
<div class="abs" style="left:53px;top:776.500px;width:250px;height:61.500px;background:#fff"></div>
<div class="t" style="left:122.500px;top:816px;font-size:13px;color:#bfe3d6">Advanced Search</div>
<svg style="left:306.500px;top:832px" width="7" height="4"><path d="M0 0 H6 L3 3.500 Z" fill="#505050"/></svg>
<svg style="left:306.500px;top:86.500px" width="7" height="4"><path d="M0 3.500 H6 L3 0 Z" fill="#a0a0a0"/></svg>
<svg style="left:0;top:780px" width="340" height="58" viewBox="0 780 340 58"><g font-family="Liberation Serif, serif" font-weight="bold" font-size="40.500" fill="#1b6a81" stroke="#1b6a81" stroke-width="0.800"><text x="15.900" y="818.500" textLength="90.700" lengthAdjust="spacingAndGlyphs">Craft</text><text x="117.900" y="818.500" textLength="83.900" lengthAdjust="spacingAndGlyphs">with</text><text x="213" y="818.500" textLength="106.700" lengthAdjust="spacingAndGlyphs">Sarah</text></g></svg>
</body>
</html>
